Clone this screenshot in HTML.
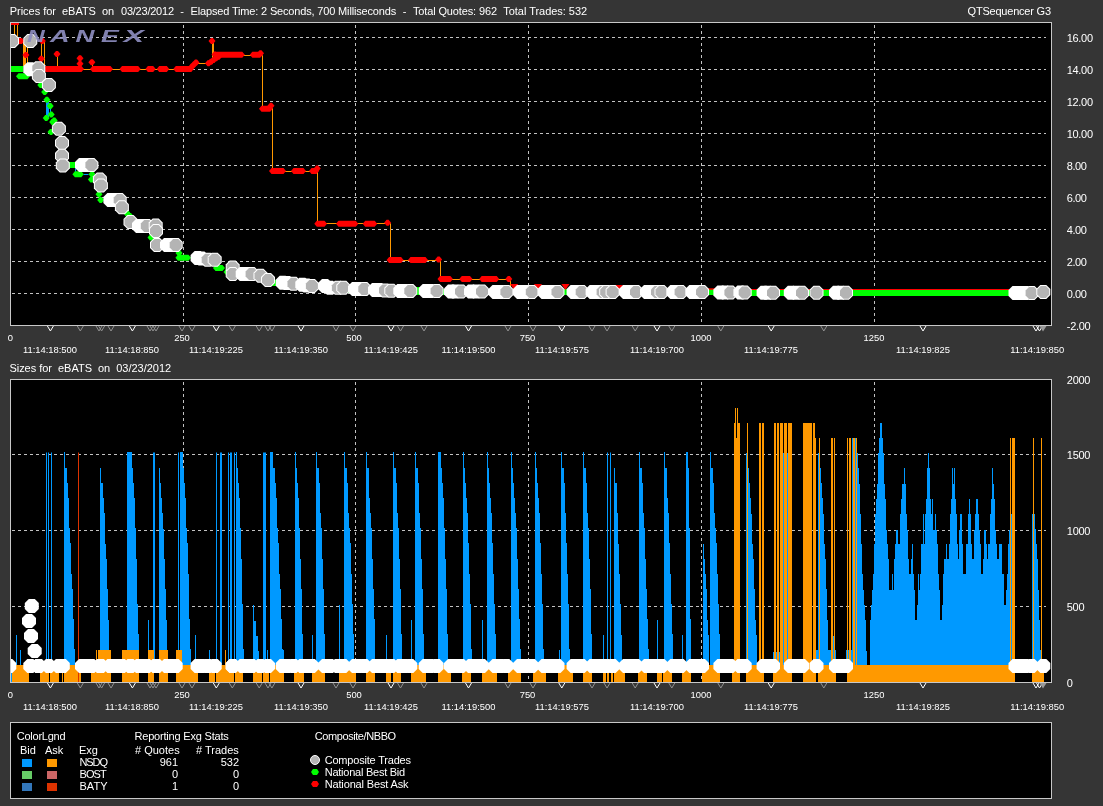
<!DOCTYPE html>
<html><head><meta charset="utf-8"><title>Nanex eBATS</title>
<style>
html,body{margin:0;padding:0;background:#353535;}
body{width:1103px;height:806px;overflow:hidden;font-family:"Liberation Sans",sans-serif;}
svg{display:block;font-family:"Liberation Sans",sans-serif;}
</style></head>
<body>
<svg width="1103" height="806" viewBox="0 0 1103 806">
<rect width="1103" height="806" fill="#353535"/>
<rect x="10" y="22" width="1042" height="304" fill="#c8c8c8"/>
<rect x="11" y="23" width="1040" height="302" fill="#000"/>
<rect x="10" y="379" width="1042" height="304" fill="#c8c8c8"/>
<rect x="11" y="380" width="1040" height="302" fill="#000"/>
<rect x="10" y="722" width="1042" height="77" fill="#c8c8c8"/>
<rect x="11" y="723" width="1040" height="75" fill="#000"/>
<line x1="12" x2="1046" y1="37.5" y2="37.5" stroke="#c2c2c2" stroke-width="1" stroke-dasharray="3 3"/>
<line x1="12" x2="1046" y1="69.5" y2="69.5" stroke="#c2c2c2" stroke-width="1" stroke-dasharray="3 3"/>
<line x1="12" x2="1046" y1="101.5" y2="101.5" stroke="#c2c2c2" stroke-width="1" stroke-dasharray="3 3"/>
<line x1="12" x2="1046" y1="133.5" y2="133.5" stroke="#c2c2c2" stroke-width="1" stroke-dasharray="3 3"/>
<line x1="12" x2="1046" y1="165.5" y2="165.5" stroke="#c2c2c2" stroke-width="1" stroke-dasharray="3 3"/>
<line x1="12" x2="1046" y1="197.5" y2="197.5" stroke="#c2c2c2" stroke-width="1" stroke-dasharray="3 3"/>
<line x1="12" x2="1046" y1="229.5" y2="229.5" stroke="#c2c2c2" stroke-width="1" stroke-dasharray="3 3"/>
<line x1="12" x2="1046" y1="261.5" y2="261.5" stroke="#c2c2c2" stroke-width="1" stroke-dasharray="3 3"/>
<line x1="12" x2="1046" y1="293.5" y2="293.5" stroke="#c2c2c2" stroke-width="1" stroke-dasharray="3 3"/>
<line x1="12" x2="1046" y1="454.5" y2="454.5" stroke="#c2c2c2" stroke-width="1" stroke-dasharray="3 3"/>
<line x1="12" x2="1046" y1="530.5" y2="530.5" stroke="#c2c2c2" stroke-width="1" stroke-dasharray="3 3"/>
<line x1="12" x2="1046" y1="606.5" y2="606.5" stroke="#c2c2c2" stroke-width="1" stroke-dasharray="3 3"/>
<line x1="183.5" x2="183.5" y1="25" y2="325" stroke="#c2c2c2" stroke-width="1" stroke-dasharray="3 3"/>
<line x1="183.5" x2="183.5" y1="382" y2="682" stroke="#c2c2c2" stroke-width="1" stroke-dasharray="3 3"/>
<line x1="355.5" x2="355.5" y1="25" y2="325" stroke="#c2c2c2" stroke-width="1" stroke-dasharray="3 3"/>
<line x1="355.5" x2="355.5" y1="382" y2="682" stroke="#c2c2c2" stroke-width="1" stroke-dasharray="3 3"/>
<line x1="528.5" x2="528.5" y1="25" y2="325" stroke="#c2c2c2" stroke-width="1" stroke-dasharray="3 3"/>
<line x1="528.5" x2="528.5" y1="382" y2="682" stroke="#c2c2c2" stroke-width="1" stroke-dasharray="3 3"/>
<line x1="701.5" x2="701.5" y1="25" y2="325" stroke="#c2c2c2" stroke-width="1" stroke-dasharray="3 3"/>
<line x1="701.5" x2="701.5" y1="382" y2="682" stroke="#c2c2c2" stroke-width="1" stroke-dasharray="3 3"/>
<line x1="874.5" x2="874.5" y1="25" y2="325" stroke="#c2c2c2" stroke-width="1" stroke-dasharray="3 3"/>
<line x1="874.5" x2="874.5" y1="382" y2="682" stroke="#c2c2c2" stroke-width="1" stroke-dasharray="3 3"/>
<defs><clipPath id="c1"><rect x="11" y="23" width="1040" height="302"/></clipPath><clipPath id="c2"><rect x="11" y="380" width="1040" height="302"/></clipPath></defs>
<g clip-path="url(#c1)">
<polyline points="44.5,69.5 192.5,69.5 192.5,63.5 212.5,63.5 212.5,55.5 262.5,55.5 262.5,108.5 272.5,108.5 272.5,171.5 317.5,171.5 317.5,223.5 390.5,223.5 390.5,260.5 440.5,260.5 440.5,279.5 510.5,279.5 510.5,288.5" fill="none" stroke="#ff9900" stroke-width="1" />
<polyline points="212.5,41.5 212.5,55.5" fill="none" stroke="#ff9900" stroke-width="1" />
<polyline points="213.5,41.5 213.5,55.5" fill="none" stroke="#ff9900" stroke-width="1" />
<polyline points="57.5,54.5 57.5,66.5" fill="none" stroke="#ff9900" stroke-width="1" />
<polyline points="41.5,41.5 41.5,66.5" fill="none" stroke="#ff9900" stroke-width="1" />
<polyline points="44.5,41.5 44.5,66.5" fill="none" stroke="#ff9900" stroke-width="1" />
<polyline points="27.5,41.5 27.5,66.5" fill="none" stroke="#ff9900" stroke-width="1" />
<polyline points="14.5,23.5 14.5,36.5" fill="none" stroke="#ff9900" stroke-width="1" />
<polyline points="17.5,23.5 17.5,36.5" fill="none" stroke="#ff9900" stroke-width="1" />
<polyline points="80.5,58.5 80.5,66.5" fill="none" stroke="#ff9900" stroke-width="1" />
<polyline points="92.5,62.5 92.5,66.5" fill="none" stroke="#ff9900" stroke-width="1" />
<rect x="23" y="41" width="3" height="25" fill="#ff9900"/>
<polyline points="47.5,100.5 47.5,117.5" fill="none" stroke="#0099ff" stroke-width="1"/>
<polyline points="46.5,100.5 46.5,117.5" fill="none" stroke="#0099ff" stroke-width="1"/>
<polyline points="48.5,100.5 48.5,117.5" fill="none" stroke="#0099ff" stroke-width="1"/>
<polyline points="50.5,106.5 50.5,114.5" fill="none" stroke="#0099ff" stroke-width="1"/>
<polyline points="75.5,168.5 75.5,174.5" fill="none" stroke="#0099ff" stroke-width="1"/>
<polyline points="83.5,174.5 88.5,174.5" fill="none" stroke="#0099ff" stroke-width="1"/>
<rect x="6" y="66" width="17.4" height="6" fill="#00ff00"/>
<polygon points="16,76.3 18.5,73.3 27.5,73.3 30,76.3 27.5,79.3 18.5,79.3" fill="#00ff00"/>
<polygon points="66,165 68.5,162 75.5,162 78,165 75.5,168 68.5,168" fill="#00ff00"/>
<polygon points="213,268 215.5,265 222.5,265 225,268 222.5,271 215.5,271" fill="#00ff00"/>
<polygon points="72.4,174.2 74.9,171.2 81.3,171.2 83.8,174.2 81.3,177.2 74.9,177.2" fill="#00ff00"/>
<polygon points="175.4,257.8 177.9,254.8 188.5,254.8 191,257.8 188.5,260.8 177.9,260.8" fill="#00ff00"/>
<rect x="272" y="280" width="18" height="6" fill="#00ff00"/>
<rect x="300" y="283" width="30" height="6" fill="#00ff00"/>
<rect x="340" y="287" width="80" height="6" fill="#00ff00"/>
<rect x="415" y="289" width="345" height="6" fill="#00ff00"/>
<rect x="750" y="290" width="259" height="6" fill="#00ff00"/>
<polygon points="37.3,85 39.8,82 41.8,82 44.3,85 41.8,88 39.8,88" fill="#00ff00"/>
<polygon points="41.2,92 43.7,89 45.7,89 48.2,92 45.7,95 43.7,95" fill="#00ff00"/>
<polygon points="43.4,99.7 45.9,96.7 47.9,96.7 50.4,99.7 47.9,102.7 45.9,102.7" fill="#00ff00"/>
<polygon points="46.7,105.9 49.2,102.9 51.2,102.9 53.7,105.9 51.2,108.9 49.2,108.9" fill="#00ff00"/>
<polygon points="42.7,117.9 45.2,114.9 47.2,114.9 49.7,117.9 47.2,120.9 45.2,120.9" fill="#00ff00"/>
<polygon points="47.7,114.6 50.2,111.6 52.2,111.6 54.7,114.6 52.2,117.6 50.2,117.6" fill="#00ff00"/>
<polygon points="50.7,120.6 53.2,117.6 55.2,117.6 57.7,120.6 55.2,123.6 53.2,123.6" fill="#00ff00"/>
<polygon points="49.2,122 51.7,119 53.7,119 56.2,122 53.7,125 51.7,125" fill="#00ff00"/>
<polygon points="47.5,132 50,129 52,129 54.5,132 52,135 50,135" fill="#00ff00"/>
<polygon points="88.5,174.2 91,171.2 93,171.2 95.5,174.2 93,177.2 91,177.2" fill="#00ff00"/>
<polygon points="87.9,179.6 90.4,176.6 92.4,176.6 94.9,179.6 92.4,182.6 90.4,182.6" fill="#00ff00"/>
<polygon points="95.5,194.2 98,191.2 100,191.2 102.5,194.2 100,197.2 98,197.2" fill="#00ff00"/>
<polygon points="97.2,200 99.7,197 101.7,197 104.2,200 101.7,203 99.7,203" fill="#00ff00"/>
<polygon points="124.1,213.9 126.6,210.9 128.6,210.9 131.1,213.9 128.6,216.9 126.6,216.9" fill="#00ff00"/>
<polygon points="121.5,211 124,208 126,208 128.5,211 126,214 124,214" fill="#00ff00"/>
<polygon points="126.5,216 129,213 131,213 133.5,216 131,219 129,219" fill="#00ff00"/>
<polygon points="147.5,237.5 150,234.5 152,234.5 154.5,237.5 152,240.5 150,240.5" fill="#00ff00"/>
<polygon points="175.5,253 178,250 180,250 182.5,253 180,256 178,256" fill="#00ff00"/>
<polygon points="223.5,272 226,269 228,269 230.5,272 228,275 226,275" fill="#00ff00"/>
<polygon points="124.5,214.5 127,211.5 129,211.5 131.5,214.5 129,217.5 127,217.5" fill="#00ff00"/>
<polygon points="270.9,282.8 273.4,279.8 275.4,279.8 277.9,282.8 275.4,285.8 273.4,285.8" fill="#00ff00"/>
<rect x="751" y="289" width="258" height="1" fill="#ff0000"/>
<rect x="705" y="288.3" width="11" height="1.5" fill="#ff0000"/>
<polygon points="16,41 18.5,38 22,38 24.5,41 22,44 18.5,44" fill="#ff0000"/>
<polygon points="43.2,69 45.7,66 81.5,66 84,69 81.5,72 45.7,72" fill="#ff0000"/>
<polygon points="90,69 92.5,66 110.5,66 113,69 110.5,72 92.5,72" fill="#ff0000"/>
<polygon points="119.5,69 122,66 138.2,66 140.7,69 138.2,72 122,72" fill="#ff0000"/>
<polygon points="145.4,69 147.9,66 153.2,66 155.7,69 153.2,72 147.9,72" fill="#ff0000"/>
<polygon points="156.7,69 159.2,66 166.8,66 169.3,69 166.8,72 159.2,72" fill="#ff0000"/>
<polygon points="173.3,69 175.8,66 191.3,66 193.8,69 191.3,72 175.8,72" fill="#ff0000"/>
<polygon points="214,54.8 216.5,51.8 242.3,51.8 244.8,54.8 242.3,57.8 216.5,57.8" fill="#ff0000"/>
<polygon points="249.8,54.8 252.3,51.8 260.2,51.8 262.7,54.8 260.2,57.8 252.3,57.8" fill="#ff0000"/>
<polygon points="259,108.8 261.5,105.8 270.2,105.8 272.7,108.8 270.2,111.8 261.5,111.8" fill="#ff0000"/>
<polygon points="269,171 271.5,168 283.5,168 286,171 283.5,174 271.5,174" fill="#ff0000"/>
<polygon points="291,171 293.5,168 303.5,168 306,171 303.5,174 293.5,174" fill="#ff0000"/>
<polygon points="309,171 311.5,168 316.5,168 319,171 316.5,174 311.5,174" fill="#ff0000"/>
<polygon points="314.3,223.8 316.8,220.8 324.5,220.8 327,223.8 324.5,226.8 316.8,226.8" fill="#ff0000"/>
<polygon points="336,223.8 338.5,220.8 355.8,220.8 358.3,223.8 355.8,226.8 338.5,226.8" fill="#ff0000"/>
<polygon points="362.7,223.8 365.2,220.8 374.7,220.8 377.2,223.8 374.7,226.8 365.2,226.8" fill="#ff0000"/>
<polygon points="386.6,260 389.1,257 401.1,257 403.6,260 401.1,263 389.1,263" fill="#ff0000"/>
<polygon points="408,260 410.5,257 425.5,257 428,260 425.5,263 410.5,263" fill="#ff0000"/>
<polygon points="437.5,279 440,276 450.4,276 452.9,279 450.4,282 440,282" fill="#ff0000"/>
<polygon points="459.3,279 461.8,276 470,276 472.5,279 470,282 461.8,282" fill="#ff0000"/>
<polygon points="479.2,279 481.7,276 496.7,276 499.2,279 496.7,282 481.7,282" fill="#ff0000"/>
<polygon points="22.4,55 24.9,52 26.9,52 29.4,55 26.9,58 24.9,58" fill="#ff0000"/>
<polygon points="38.8,40.9 41.3,37.9 43.3,37.9 45.8,40.9 43.3,43.9 41.3,43.9" fill="#ff0000"/>
<polygon points="37.8,58.7 40.3,55.7 42.3,55.7 44.8,58.7 42.3,61.7 40.3,61.7" fill="#ff0000"/>
<polygon points="53.5,54 56,51 58,51 60.5,54 58,57 56,57" fill="#ff0000"/>
<polygon points="76.5,58.2 79,55.2 81,55.2 83.5,58.2 81,61.2 79,61.2" fill="#ff0000"/>
<polygon points="76.5,63.7 79,60.7 81,60.7 83.5,63.7 81,66.7 79,66.7" fill="#ff0000"/>
<polygon points="88.4,62.2 90.9,59.2 92.9,59.2 95.4,62.2 92.9,65.2 90.9,65.2" fill="#ff0000"/>
<polygon points="192.5,62.5 195,59.5 197,59.5 199.5,62.5 197,65.5 195,65.5" fill="#ff0000"/>
<polygon points="190.5,64.5 193,61.5 195,61.5 197.5,64.5 195,67.5 193,67.5" fill="#ff0000"/>
<polygon points="188.5,66.5 191,63.5 193,63.5 195.5,66.5 193,69.5 191,69.5" fill="#ff0000"/>
<polygon points="205,63.3 207.5,60.3 209.5,60.3 212,63.3 209.5,66.3 207.5,66.3" fill="#ff0000"/>
<polygon points="207.5,61.8 210,58.8 212,58.8 214.5,61.8 212,64.8 210,64.8" fill="#ff0000"/>
<polygon points="210,60 212.5,57 214.5,57 217,60 214.5,63 212.5,63" fill="#ff0000"/>
<polygon points="212.5,58.3 215,55.3 217,55.3 219.5,58.3 217,61.3 215,61.3" fill="#ff0000"/>
<polygon points="215,56.7 217.5,53.7 219.5,53.7 222,56.7 219.5,59.7 217.5,59.7" fill="#ff0000"/>
<polygon points="211.5,54.5 214,51.5 216,51.5 218.5,54.5 216,57.5 214,57.5" fill="#ff0000"/>
<polygon points="208.5,41 211,38 213,38 215.5,41 213,44 211,44" fill="#ff0000"/>
<polygon points="257,53.2 259.5,50.2 261.5,50.2 264,53.2 261.5,56.2 259.5,56.2" fill="#ff0000"/>
<polygon points="267.5,105.7 270,102.7 272,102.7 274.5,105.7 272,108.7 270,108.7" fill="#ff0000"/>
<polygon points="313.7,168.5 316.2,165.5 318.2,165.5 320.7,168.5 318.2,171.5 316.2,171.5" fill="#ff0000"/>
<polygon points="384.1,222.7 386.6,219.7 388.6,219.7 391.1,222.7 388.6,225.7 386.6,225.7" fill="#ff0000"/>
<polygon points="435.1,259.6 437.6,256.6 439.6,256.6 442.1,259.6 439.6,262.6 437.6,262.6" fill="#ff0000"/>
<polygon points="505.3,279 507.8,276 509.8,276 512.3,279 509.8,282 507.8,282" fill="#ff0000"/>
<rect x="11" y="23" width="8" height="2" fill="#ff0000"/>
<polygon points="510.2,284 518.2,284 514.2,290" fill="#ff0000"/>
<polygon points="534,284 542,284 538,290" fill="#ff0000"/>
<polygon points="561.4,284 569.4,284 565.4,290" fill="#ff0000"/>
<polygon points="615,285 623,285 619,291" fill="#ff0000"/>
<polygon points="9,33.9 15,33.9 19,37.9 19,43.9 15,47.9 9,47.9 5,43.9 5,37.9" fill="#fff"/>
<polygon points="9.43,34.9 14.57,34.9 18,38.33 18,43.47 14.57,46.9 9.43,46.9 6,43.47 6,38.33" fill="#b4b4b4"/>
<polygon points="27.3,33.9 33.3,33.9 37.3,37.9 37.3,43.9 33.3,47.9 27.3,47.9 23.3,43.9 23.3,37.9" fill="#fff"/>
<polygon points="27.73,34.9 32.87,34.9 36.3,38.33 36.3,43.47 32.87,46.9 27.73,46.9 24.3,43.47 24.3,38.33" fill="#b4b4b4"/>
<polygon points="27.3,62.2 33.3,62.2 37.3,66.2 37.3,72.2 33.3,76.2 27.3,76.2 23.3,72.2 23.3,66.2" fill="#fff"/>
<polygon points="35.3,61.3 41.3,61.3 45.3,65.3 45.3,71.3 41.3,75.3 35.3,75.3 31.3,71.3 31.3,65.3" fill="#fff"/>
<polygon points="35.73,62.3 40.87,62.3 44.3,65.73 44.3,70.87 40.87,74.3 35.73,74.3 32.3,70.87 32.3,65.73" fill="#b4b4b4"/>
<polygon points="35.9,68.9 41.9,68.9 45.9,72.9 45.9,78.9 41.9,82.9 35.9,82.9 31.9,78.9 31.9,72.9" fill="#fff"/>
<polygon points="36.33,69.9 41.47,69.9 44.9,73.33 44.9,78.47 41.47,81.9 36.33,81.9 32.9,78.47 32.9,73.33" fill="#b4b4b4"/>
<polygon points="45.9,77.9 51.9,77.9 55.9,81.9 55.9,87.9 51.9,91.9 45.9,91.9 41.9,87.9 41.9,81.9" fill="#fff"/>
<polygon points="46.33,78.9 51.47,78.9 54.9,82.33 54.9,87.47 51.47,90.9 46.33,90.9 42.9,87.47 42.9,82.33" fill="#b4b4b4"/>
<polygon points="55.9,121.7 61.9,121.7 65.9,125.7 65.9,131.7 61.9,135.7 55.9,135.7 51.9,131.7 51.9,125.7" fill="#fff"/>
<polygon points="56.33,122.7 61.47,122.7 64.9,126.13 64.9,131.27 61.47,134.7 56.33,134.7 52.9,131.27 52.9,126.13" fill="#b4b4b4"/>
<polygon points="59,135.9 65,135.9 69,139.9 69,145.9 65,149.9 59,149.9 55,145.9 55,139.9" fill="#fff"/>
<polygon points="59.43,136.9 64.57,136.9 68,140.33 68,145.47 64.57,148.9 59.43,148.9 56,145.47 56,140.33" fill="#b4b4b4"/>
<polygon points="59,148.8 65,148.8 69,152.8 69,158.8 65,162.8 59,162.8 55,158.8 55,152.8" fill="#fff"/>
<polygon points="59.43,149.8 64.57,149.8 68,153.23 68,158.37 64.57,161.8 59.43,161.8 56,158.37 56,153.23" fill="#b4b4b4"/>
<polygon points="59.8,158.5 65.8,158.5 69.8,162.5 69.8,168.5 65.8,172.5 59.8,172.5 55.8,168.5 55.8,162.5" fill="#fff"/>
<polygon points="60.23,159.5 65.37,159.5 68.8,162.93 68.8,168.07 65.37,171.5 60.23,171.5 56.8,168.07 56.8,162.93" fill="#b4b4b4"/>
<polygon points="79,158 85,158 89,162 89,168 85,172 79,172 75,168 75,162" fill="#fff"/>
<polygon points="83,158 89,158 93,162 93,168 89,172 83,172 79,168 79,162" fill="#fff"/>
<polygon points="88.4,158 94.4,158 98.4,162 98.4,168 94.4,172 88.4,172 84.4,168 84.4,162" fill="#fff"/>
<polygon points="88.83,159 93.97,159 97.4,162.43 97.4,167.57 93.97,171 88.83,171 85.4,167.57 85.4,162.43" fill="#b4b4b4"/>
<polygon points="96.9,172.6 102.9,172.6 106.9,176.6 106.9,182.6 102.9,186.6 96.9,186.6 92.9,182.6 92.9,176.6" fill="#fff"/>
<polygon points="97.33,173.6 102.47,173.6 105.9,177.03 105.9,182.17 102.47,185.6 97.33,185.6 93.9,182.17 93.9,177.03" fill="#b4b4b4"/>
<polygon points="97.9,178.4 103.9,178.4 107.9,182.4 107.9,188.4 103.9,192.4 97.9,192.4 93.9,188.4 93.9,182.4" fill="#fff"/>
<polygon points="98.33,179.4 103.47,179.4 106.9,182.83 106.9,187.97 103.47,191.4 98.33,191.4 94.9,187.97 94.9,182.83" fill="#b4b4b4"/>
<polygon points="107.4,193 113.4,193 117.4,197 117.4,203 113.4,207 107.4,207 103.4,203 103.4,197" fill="#fff"/>
<polygon points="111.5,193 117.5,193 121.5,197 121.5,203 117.5,207 111.5,207 107.5,203 107.5,197" fill="#fff"/>
<polygon points="116.7,193 122.7,193 126.7,197 126.7,203 122.7,207 116.7,207 112.7,203 112.7,197" fill="#fff"/>
<polygon points="117.13,194 122.27,194 125.7,197.43 125.7,202.57 122.27,206 117.13,206 113.7,202.57 113.7,197.43" fill="#b4b4b4"/>
<polygon points="118.9,200.3 124.9,200.3 128.9,204.3 128.9,210.3 124.9,214.3 118.9,214.3 114.9,210.3 114.9,204.3" fill="#fff"/>
<polygon points="119.33,201.3 124.47,201.3 127.9,204.73 127.9,209.87 124.47,213.3 119.33,213.3 115.9,209.87 115.9,204.73" fill="#b4b4b4"/>
<polygon points="127.5,215 133.5,215 137.5,219 137.5,225 133.5,229 127.5,229 123.5,225 123.5,219" fill="#fff"/>
<polygon points="127.93,216 133.07,216 136.5,219.43 136.5,224.57 133.07,228 127.93,228 124.5,224.57 124.5,219.43" fill="#b4b4b4"/>
<polygon points="136,219 142,219 146,223 146,229 142,233 136,233 132,229 132,223" fill="#fff"/>
<polygon points="139.5,219 145.5,219 149.5,223 149.5,229 145.5,233 139.5,233 135.5,229 135.5,223" fill="#fff"/>
<polygon points="143.8,219 149.8,219 153.8,223 153.8,229 149.8,233 143.8,233 139.8,229 139.8,223" fill="#fff"/>
<polygon points="144.23,220 149.37,220 152.8,223.43 152.8,228.57 149.37,232 144.23,232 140.8,228.57 140.8,223.43" fill="#b4b4b4"/>
<polygon points="152.7,218.5 158.7,218.5 162.7,222.5 162.7,228.5 158.7,232.5 152.7,232.5 148.7,228.5 148.7,222.5" fill="#fff"/>
<polygon points="153.13,219.5 158.27,219.5 161.7,222.93 161.7,228.07 158.27,231.5 153.13,231.5 149.7,228.07 149.7,222.93" fill="#b4b4b4"/>
<polygon points="153,224 159,224 163,228 163,234 159,238 153,238 149,234 149,228" fill="#fff"/>
<polygon points="153.43,225 158.57,225 162,228.43 162,233.57 158.57,237 153.43,237 150,233.57 150,228.43" fill="#b4b4b4"/>
<polygon points="154,238 160,238 164,242 164,248 160,252 154,252 150,248 150,242" fill="#fff"/>
<polygon points="154.43,239 159.57,239 163,242.43 163,247.57 159.57,251 154.43,251 151,247.57 151,242.43" fill="#b4b4b4"/>
<polygon points="164,238 170,238 174,242 174,248 170,252 164,252 160,248 160,242" fill="#fff"/>
<polygon points="168,238 174,238 178,242 178,248 174,252 168,252 164,248 164,242" fill="#fff"/>
<polygon points="172.7,238 178.7,238 182.7,242 182.7,248 178.7,252 172.7,252 168.7,248 168.7,242" fill="#fff"/>
<polygon points="173.13,239 178.27,239 181.7,242.43 181.7,247.57 178.27,251 173.13,251 169.7,247.57 169.7,242.43" fill="#b4b4b4"/>
<polygon points="194.6,251 200.6,251 204.6,255 204.6,261 200.6,265 194.6,265 190.6,261 190.6,255" fill="#fff"/>
<polygon points="198.5,251.5 204.5,251.5 208.5,255.5 208.5,261.5 204.5,265.5 198.5,265.5 194.5,261.5 194.5,255.5" fill="#fff"/>
<polygon points="204.7,252.7 210.7,252.7 214.7,256.7 214.7,262.7 210.7,266.7 204.7,266.7 200.7,262.7 200.7,256.7" fill="#fff"/>
<polygon points="205.13,253.7 210.27,253.7 213.7,257.13 213.7,262.27 210.27,265.7 205.13,265.7 201.7,262.27 201.7,257.13" fill="#b4b4b4"/>
<polygon points="211.7,252.7 217.7,252.7 221.7,256.7 221.7,262.7 217.7,266.7 211.7,266.7 207.7,262.7 207.7,256.7" fill="#fff"/>
<polygon points="212.13,253.7 217.27,253.7 220.7,257.13 220.7,262.27 217.27,265.7 212.13,265.7 208.7,262.27 208.7,257.13" fill="#b4b4b4"/>
<polygon points="229.7,260.5 235.7,260.5 239.7,264.5 239.7,270.5 235.7,274.5 229.7,274.5 225.7,270.5 225.7,264.5" fill="#fff"/>
<polygon points="230.13,261.5 235.27,261.5 238.7,264.93 238.7,270.07 235.27,273.5 230.13,273.5 226.7,270.07 226.7,264.93" fill="#b4b4b4"/>
<polygon points="229.7,267 235.7,267 239.7,271 239.7,277 235.7,281 229.7,281 225.7,277 225.7,271" fill="#fff"/>
<polygon points="230.13,268 235.27,268 238.7,271.43 238.7,276.57 235.27,280 230.13,280 226.7,276.57 226.7,271.43" fill="#b4b4b4"/>
<polygon points="239.7,267 245.7,267 249.7,271 249.7,277 245.7,281 239.7,281 235.7,277 235.7,271" fill="#fff"/>
<polygon points="243,267 249,267 253,271 253,277 249,281 243,281 239,277 239,271" fill="#fff"/>
<polygon points="248.6,267 254.6,267 258.6,271 258.6,277 254.6,281 248.6,281 244.6,277 244.6,271" fill="#fff"/>
<polygon points="249.03,268 254.17,268 257.6,271.43 257.6,276.57 254.17,280 249.03,280 245.6,276.57 245.6,271.43" fill="#b4b4b4"/>
<polygon points="257.5,268.8 263.5,268.8 267.5,272.8 267.5,278.8 263.5,282.8 257.5,282.8 253.5,278.8 253.5,272.8" fill="#fff"/>
<polygon points="257.93,269.8 263.07,269.8 266.5,273.23 266.5,278.37 263.07,281.8 257.93,281.8 254.5,278.37 254.5,273.23" fill="#b4b4b4"/>
<polygon points="265,273 271,273 275,277 275,283 271,287 265,287 261,283 261,277" fill="#fff"/>
<polygon points="265.43,274 270.57,274 274,277.43 274,282.57 270.57,286 265.43,286 262,282.57 262,277.43" fill="#b4b4b4"/>
<polygon points="279.7,275.8 285.7,275.8 289.7,279.8 289.7,285.8 285.7,289.8 279.7,289.8 275.7,285.8 275.7,279.8" fill="#fff"/>
<polygon points="284,276 290,276 294,280 294,286 290,290 284,290 280,286 280,280" fill="#fff"/>
<polygon points="290.5,276.8 296.5,276.8 300.5,280.8 300.5,286.8 296.5,290.8 290.5,290.8 286.5,286.8 286.5,280.8" fill="#fff"/>
<polygon points="290.93,277.8 296.07,277.8 299.5,281.23 299.5,286.37 296.07,289.8 290.93,289.8 287.5,286.37 287.5,281.23" fill="#b4b4b4"/>
<polygon points="299.3,277.7 305.3,277.7 309.3,281.7 309.3,287.7 305.3,291.7 299.3,291.7 295.3,287.7 295.3,281.7" fill="#fff"/>
<polygon points="303.5,278.5 309.5,278.5 313.5,282.5 313.5,288.5 309.5,292.5 303.5,292.5 299.5,288.5 299.5,282.5" fill="#fff"/>
<polygon points="308.9,279 314.9,279 318.9,283 318.9,289 314.9,293 308.9,293 304.9,289 304.9,283" fill="#fff"/>
<polygon points="309.33,280 314.47,280 317.9,283.43 317.9,288.57 314.47,292 309.33,292 305.9,288.57 305.9,283.43" fill="#b4b4b4"/>
<polygon points="322,279 328,279 332,283 332,289 328,293 322,293 318,289 318,283" fill="#fff"/>
<polygon points="327,280.8 333,280.8 337,284.8 337,290.8 333,294.8 327,294.8 323,290.8 323,284.8" fill="#fff"/>
<polygon points="334.9,280.8 340.9,280.8 344.9,284.8 344.9,290.8 340.9,294.8 334.9,294.8 330.9,290.8 330.9,284.8" fill="#fff"/>
<polygon points="335.33,281.8 340.47,281.8 343.9,285.23 343.9,290.37 340.47,293.8 335.33,293.8 331.9,290.37 331.9,285.23" fill="#b4b4b4"/>
<polygon points="340.3,280.8 346.3,280.8 350.3,284.8 350.3,290.8 346.3,294.8 340.3,294.8 336.3,290.8 336.3,284.8" fill="#fff"/>
<polygon points="340.73,281.8 345.87,281.8 349.3,285.23 349.3,290.37 345.87,293.8 340.73,293.8 337.3,290.37 337.3,285.23" fill="#b4b4b4"/>
<polygon points="352,282 358,282 362,286 362,292 358,296 352,296 348,292 348,286" fill="#fff"/>
<polygon points="355,282 361,282 365,286 365,292 361,296 355,296 351,292 351,286" fill="#fff"/>
<polygon points="361.3,282 367.3,282 371.3,286 371.3,292 367.3,296 361.3,296 357.3,292 357.3,286" fill="#fff"/>
<polygon points="361.73,283 366.87,283 370.3,286.43 370.3,291.57 366.87,295 361.73,295 358.3,291.57 358.3,286.43" fill="#b4b4b4"/>
<polygon points="372,283 378,283 382,287 382,293 378,297 372,297 368,293 368,287" fill="#fff"/>
<polygon points="376,283 382,283 386,287 386,293 382,297 376,297 372,293 372,287" fill="#fff"/>
<polygon points="382,283.4 388,283.4 392,287.4 392,293.4 388,297.4 382,297.4 378,293.4 378,287.4" fill="#fff"/>
<polygon points="382.43,284.4 387.57,284.4 391,287.83 391,292.97 387.57,296.4 382.43,296.4 379,292.97 379,287.83" fill="#b4b4b4"/>
<polygon points="388.3,283.8 394.3,283.8 398.3,287.8 398.3,293.8 394.3,297.8 388.3,297.8 384.3,293.8 384.3,287.8" fill="#fff"/>
<polygon points="388.73,284.8 393.87,284.8 397.3,288.23 397.3,293.37 393.87,296.8 388.73,296.8 385.3,293.37 385.3,288.23" fill="#b4b4b4"/>
<polygon points="397.3,284 403.3,284 407.3,288 407.3,294 403.3,298 397.3,298 393.3,294 393.3,288" fill="#fff"/>
<polygon points="401,284 407,284 411,288 411,294 407,298 401,298 397,294 397,288" fill="#fff"/>
<polygon points="407.3,284 413.3,284 417.3,288 417.3,294 413.3,298 407.3,298 403.3,294 403.3,288" fill="#fff"/>
<polygon points="407.73,285 412.87,285 416.3,288.43 416.3,293.57 412.87,297 407.73,297 404.3,293.57 404.3,288.43" fill="#b4b4b4"/>
<polygon points="422.7,284 428.7,284 432.7,288 432.7,294 428.7,298 422.7,298 418.7,294 418.7,288" fill="#fff"/>
<polygon points="427,284 433,284 437,288 437,294 433,298 427,298 423,294 423,288" fill="#fff"/>
<polygon points="433.6,284 439.6,284 443.6,288 443.6,294 439.6,298 433.6,298 429.6,294 429.6,288" fill="#fff"/>
<polygon points="434.03,285 439.17,285 442.6,288.43 442.6,293.57 439.17,297 434.03,297 430.6,293.57 430.6,288.43" fill="#b4b4b4"/>
<polygon points="448,284.5 454,284.5 458,288.5 458,294.5 454,298.5 448,298.5 444,294.5 444,288.5" fill="#fff"/>
<polygon points="452,284.5 458,284.5 462,288.5 462,294.5 458,298.5 452,298.5 448,294.5 448,288.5" fill="#fff"/>
<polygon points="458,284.5 464,284.5 468,288.5 468,294.5 464,298.5 458,298.5 454,294.5 454,288.5" fill="#fff"/>
<polygon points="458.43,285.5 463.57,285.5 467,288.93 467,294.07 463.57,297.5 458.43,297.5 455,294.07 455,288.93" fill="#b4b4b4"/>
<polygon points="468,284.5 474,284.5 478,288.5 478,294.5 474,298.5 468,298.5 464,294.5 464,288.5" fill="#fff"/>
<polygon points="473,284.5 479,284.5 483,288.5 483,294.5 479,298.5 473,298.5 469,294.5 469,288.5" fill="#fff"/>
<polygon points="479,284.5 485,284.5 489,288.5 489,294.5 485,298.5 479,298.5 475,294.5 475,288.5" fill="#fff"/>
<polygon points="479.43,285.5 484.57,285.5 488,288.93 488,294.07 484.57,297.5 479.43,297.5 476,294.07 476,288.93" fill="#b4b4b4"/>
<polygon points="492.5,285 498.5,285 502.5,289 502.5,295 498.5,299 492.5,299 488.5,295 488.5,289" fill="#fff"/>
<polygon points="497,285 503,285 507,289 507,295 503,299 497,299 493,295 493,289" fill="#fff"/>
<polygon points="503.4,285 509.4,285 513.4,289 513.4,295 509.4,299 503.4,299 499.4,295 499.4,289" fill="#fff"/>
<polygon points="503.83,286 508.97,286 512.4,289.43 512.4,294.57 508.97,298 503.83,298 500.4,294.57 500.4,289.43" fill="#b4b4b4"/>
<polygon points="517,285 523,285 527,289 527,295 523,299 517,299 513,295 513,289" fill="#fff"/>
<polygon points="522,285 528,285 532,289 532,295 528,299 522,299 518,295 518,289" fill="#fff"/>
<polygon points="528.8,285 534.8,285 538.8,289 538.8,295 534.8,299 528.8,299 524.8,295 524.8,289" fill="#fff"/>
<polygon points="529.23,286 534.37,286 537.8,289.43 537.8,294.57 534.37,298 529.23,298 525.8,294.57 525.8,289.43" fill="#b4b4b4"/>
<polygon points="541.5,285 547.5,285 551.5,289 551.5,295 547.5,299 541.5,299 537.5,295 537.5,289" fill="#fff"/>
<polygon points="546,285 552,285 556,289 556,295 552,299 546,299 542,295 542,289" fill="#fff"/>
<polygon points="549,285 555,285 559,289 559,295 555,299 549,299 545,295 545,289" fill="#fff"/>
<polygon points="554.5,285 560.5,285 564.5,289 564.5,295 560.5,299 554.5,299 550.5,295 550.5,289" fill="#fff"/>
<polygon points="554.93,286 560.07,286 563.5,289.43 563.5,294.57 560.07,298 554.93,298 551.5,294.57 551.5,289.43" fill="#b4b4b4"/>
<polygon points="570.6,285 576.6,285 580.6,289 580.6,295 576.6,299 570.6,299 566.6,295 566.6,289" fill="#fff"/>
<polygon points="574,285 580,285 584,289 584,295 580,299 574,299 570,295 570,289" fill="#fff"/>
<polygon points="578.7,285 584.7,285 588.7,289 588.7,295 584.7,299 578.7,299 574.7,295 574.7,289" fill="#fff"/>
<polygon points="579.13,286 584.27,286 587.7,289.43 587.7,294.57 584.27,298 579.13,298 575.7,294.57 575.7,289.43" fill="#b4b4b4"/>
<polygon points="589.6,285 595.6,285 599.6,289 599.6,295 595.6,299 589.6,299 585.6,295 585.6,289" fill="#fff"/>
<polygon points="594,285 600,285 604,289 604,295 600,299 594,299 590,295 590,289" fill="#fff"/>
<polygon points="599.6,285 605.6,285 609.6,289 609.6,295 605.6,299 599.6,299 595.6,295 595.6,289" fill="#fff"/>
<polygon points="600.03,286 605.17,286 608.6,289.43 608.6,294.57 605.17,298 600.03,298 596.6,294.57 596.6,289.43" fill="#b4b4b4"/>
<polygon points="603.2,285 609.2,285 613.2,289 613.2,295 609.2,299 603.2,299 599.2,295 599.2,289" fill="#fff"/>
<polygon points="603.63,286 608.77,286 612.2,289.43 612.2,294.57 608.77,298 603.63,298 600.2,294.57 600.2,289.43" fill="#b4b4b4"/>
<polygon points="609.6,285 615.6,285 619.6,289 619.6,295 615.6,299 609.6,299 605.6,295 605.6,289" fill="#fff"/>
<polygon points="610.03,286 615.17,286 618.6,289.43 618.6,294.57 615.17,298 610.03,298 606.6,294.57 606.6,289.43" fill="#b4b4b4"/>
<polygon points="623,285 629,285 633,289 633,295 629,299 623,299 619,295 619,289" fill="#fff"/>
<polygon points="627,285 633,285 637,289 637,295 633,299 627,299 623,295 623,289" fill="#fff"/>
<polygon points="633,285 639,285 643,289 643,295 639,299 633,299 629,295 629,289" fill="#fff"/>
<polygon points="633.43,286 638.57,286 642,289.43 642,294.57 638.57,298 633.43,298 630,294.57 630,289.43" fill="#b4b4b4"/>
<polygon points="644,285 650,285 654,289 654,295 650,299 644,299 640,295 640,289" fill="#fff"/>
<polygon points="648,285 654,285 658,289 658,295 654,299 648,299 644,295 644,289" fill="#fff"/>
<polygon points="654,285 660,285 664,289 664,295 660,299 654,299 650,295 650,289" fill="#fff"/>
<polygon points="654.43,286 659.57,286 663,289.43 663,294.57 659.57,298 654.43,298 651,294.57 651,289.43" fill="#b4b4b4"/>
<polygon points="658.5,285 664.5,285 668.5,289 668.5,295 664.5,299 658.5,299 654.5,295 654.5,289" fill="#fff"/>
<polygon points="658.93,286 664.07,286 667.5,289.43 667.5,294.57 664.07,298 658.93,298 655.5,294.57 655.5,289.43" fill="#b4b4b4"/>
<polygon points="670.3,285 676.3,285 680.3,289 680.3,295 676.3,299 670.3,299 666.3,295 666.3,289" fill="#fff"/>
<polygon points="673,285 679,285 683,289 683,295 679,299 673,299 669,295 669,289" fill="#fff"/>
<polygon points="677.6,285 683.6,285 687.6,289 687.6,295 683.6,299 677.6,299 673.6,295 673.6,289" fill="#fff"/>
<polygon points="678.03,286 683.17,286 686.6,289.43 686.6,294.57 683.17,298 678.03,298 674.6,294.57 674.6,289.43" fill="#b4b4b4"/>
<polygon points="689.3,285 695.3,285 699.3,289 699.3,295 695.3,299 689.3,299 685.3,295 685.3,289" fill="#fff"/>
<polygon points="693,285 699,285 703,289 703,295 699,299 693,299 689,295 689,289" fill="#fff"/>
<polygon points="699,285 705,285 709,289 709,295 705,299 699,299 695,295 695,289" fill="#fff"/>
<polygon points="699.43,286 704.57,286 708,289.43 708,294.57 704.57,298 699.43,298 696,294.57 696,289.43" fill="#b4b4b4"/>
<polygon points="717.4,285.5 723.4,285.5 727.4,289.5 727.4,295.5 723.4,299.5 717.4,299.5 713.4,295.5 713.4,289.5" fill="#fff"/>
<polygon points="722,285.5 728,285.5 732,289.5 732,295.5 728,299.5 722,299.5 718,295.5 718,289.5" fill="#fff"/>
<polygon points="727.4,285.5 733.4,285.5 737.4,289.5 737.4,295.5 733.4,299.5 727.4,299.5 723.4,295.5 723.4,289.5" fill="#fff"/>
<polygon points="727.83,286.5 732.97,286.5 736.4,289.93 736.4,295.07 732.97,298.5 727.83,298.5 724.4,295.07 724.4,289.93" fill="#b4b4b4"/>
<polygon points="737.4,285.5 743.4,285.5 747.4,289.5 747.4,295.5 743.4,299.5 737.4,299.5 733.4,295.5 733.4,289.5" fill="#fff"/>
<polygon points="741.7,285.5 747.7,285.5 751.7,289.5 751.7,295.5 747.7,299.5 741.7,299.5 737.7,295.5 737.7,289.5" fill="#fff"/>
<polygon points="742.13,286.5 747.27,286.5 750.7,289.93 750.7,295.07 747.27,298.5 742.13,298.5 738.7,295.07 738.7,289.93" fill="#b4b4b4"/>
<polygon points="760.6,285.7 766.6,285.7 770.6,289.7 770.6,295.7 766.6,299.7 760.6,299.7 756.6,295.7 756.6,289.7" fill="#fff"/>
<polygon points="764.5,285.7 770.5,285.7 774.5,289.7 774.5,295.7 770.5,299.7 764.5,299.7 760.5,295.7 760.5,289.7" fill="#fff"/>
<polygon points="770,285.7 776,285.7 780,289.7 780,295.7 776,299.7 770,299.7 766,295.7 766,289.7" fill="#fff"/>
<polygon points="770.43,286.7 775.57,286.7 779,290.13 779,295.27 775.57,298.7 770.43,298.7 767,295.27 767,290.13" fill="#b4b4b4"/>
<polygon points="787.8,285.7 793.8,285.7 797.8,289.7 797.8,295.7 793.8,299.7 787.8,299.7 783.8,295.7 783.8,289.7" fill="#fff"/>
<polygon points="793,285.7 799,285.7 803,289.7 803,295.7 799,299.7 793,299.7 789,295.7 789,289.7" fill="#fff"/>
<polygon points="799,285.7 805,285.7 809,289.7 809,295.7 805,299.7 799,299.7 795,295.7 795,289.7" fill="#fff"/>
<polygon points="799.43,286.7 804.57,286.7 808,290.13 808,295.27 804.57,298.7 799.43,298.7 796,295.27 796,290.13" fill="#b4b4b4"/>
<polygon points="813.5,285.7 819.5,285.7 823.5,289.7 823.5,295.7 819.5,299.7 813.5,299.7 809.5,295.7 809.5,289.7" fill="#fff"/>
<polygon points="813.93,286.7 819.07,286.7 822.5,290.13 822.5,295.27 819.07,298.7 813.93,298.7 810.5,295.27 810.5,290.13" fill="#b4b4b4"/>
<polygon points="833,285.7 839,285.7 843,289.7 843,295.7 839,299.7 833,299.7 829,295.7 829,289.7" fill="#fff"/>
<polygon points="837.5,285.7 843.5,285.7 847.5,289.7 847.5,295.7 843.5,299.7 837.5,299.7 833.5,295.7 833.5,289.7" fill="#fff"/>
<polygon points="843,285.7 849,285.7 853,289.7 853,295.7 849,299.7 843,299.7 839,295.7 839,289.7" fill="#fff"/>
<polygon points="843.43,286.7 848.57,286.7 852,290.13 852,295.27 848.57,298.7 843.43,298.7 840,295.27 840,290.13" fill="#b4b4b4"/>
<polygon points="1012.5,286 1018.5,286 1022.5,290 1022.5,296 1018.5,300 1012.5,300 1008.5,296 1008.5,290" fill="#fff"/>
<polygon points="1017,286 1023,286 1027,290 1027,296 1023,300 1017,300 1013,296 1013,290" fill="#fff"/>
<polygon points="1022,286 1028,286 1032,290 1032,296 1028,300 1022,300 1018,296 1018,290" fill="#fff"/>
<polygon points="1028.6,286 1034.6,286 1038.6,290 1038.6,296 1034.6,300 1028.6,300 1024.6,296 1024.6,290" fill="#fff"/>
<polygon points="1029.03,287 1034.17,287 1037.6,290.43 1037.6,295.57 1034.17,299 1029.03,299 1025.6,295.57 1025.6,290.43" fill="#b4b4b4"/>
<polygon points="1040.3,285 1046.3,285 1050.3,289 1050.3,295 1046.3,299 1040.3,299 1036.3,295 1036.3,289" fill="#fff"/>
<polygon points="1040.73,286 1045.87,286 1049.3,289.43 1049.3,294.57 1045.87,298 1040.73,298 1037.3,294.57 1037.3,289.43" fill="#b4b4b4"/>
</g>
<polyline points="47.4,326 50.4,331 53.4,326" fill="none" stroke="#ffffff" stroke-width="1"/>
<polyline points="77.3,326 80.3,331 83.3,326" fill="none" stroke="#909090" stroke-width="1"/>
<polyline points="96,326 99,331 102,326" fill="none" stroke="#909090" stroke-width="1"/>
<polyline points="98.6,326 101.6,331 104.6,326" fill="none" stroke="#909090" stroke-width="1"/>
<polyline points="108,326 111,331 114,326" fill="none" stroke="#909090" stroke-width="1"/>
<polyline points="129.4,326 132.4,331 135.4,326" fill="none" stroke="#ffffff" stroke-width="1"/>
<polyline points="147,326 150,331 153,326" fill="none" stroke="#909090" stroke-width="1"/>
<polyline points="150,326 153,331 156,326" fill="none" stroke="#909090" stroke-width="1"/>
<polyline points="153,326 156,331 159,326" fill="none" stroke="#909090" stroke-width="1"/>
<polyline points="179,326 182,331 185,326" fill="none" stroke="#909090" stroke-width="1"/>
<polyline points="189,326 192,331 195,326" fill="none" stroke="#909090" stroke-width="1"/>
<polyline points="213.3,326 216.3,331 219.3,326" fill="none" stroke="#ffffff" stroke-width="1"/>
<polyline points="229.3,326 232.3,331 235.3,326" fill="none" stroke="#909090" stroke-width="1"/>
<polyline points="256.2,326 259.2,331 262.2,326" fill="none" stroke="#909090" stroke-width="1"/>
<polyline points="265,326 268,331 271,326" fill="none" stroke="#909090" stroke-width="1"/>
<polyline points="268.9,326 271.9,331 274.9,326" fill="none" stroke="#909090" stroke-width="1"/>
<polyline points="298,326 301,331 304,326" fill="none" stroke="#ffffff" stroke-width="1"/>
<polyline points="333,326 336,331 339,326" fill="none" stroke="#909090" stroke-width="1"/>
<polyline points="350,326 353,331 356,326" fill="none" stroke="#909090" stroke-width="1"/>
<polyline points="388,326 391,331 394,326" fill="none" stroke="#ffffff" stroke-width="1"/>
<polyline points="397.5,326 400.5,331 403.5,326" fill="none" stroke="#909090" stroke-width="1"/>
<polyline points="421,326 424,331 427,326" fill="none" stroke="#909090" stroke-width="1"/>
<polyline points="465.5,326 468.5,331 471.5,326" fill="none" stroke="#ffffff" stroke-width="1"/>
<polyline points="505,326 508,331 511,326" fill="none" stroke="#909090" stroke-width="1"/>
<polyline points="530,326 533,331 536,326" fill="none" stroke="#909090" stroke-width="1"/>
<polyline points="558.8,326 561.8,331 564.8,326" fill="none" stroke="#ffffff" stroke-width="1"/>
<polyline points="589,326 592,331 595,326" fill="none" stroke="#909090" stroke-width="1"/>
<polyline points="604,326 607,331 610,326" fill="none" stroke="#909090" stroke-width="1"/>
<polyline points="632.2,326 635.2,331 638.2,326" fill="none" stroke="#909090" stroke-width="1"/>
<polyline points="654,326 657,331 660,326" fill="none" stroke="#ffffff" stroke-width="1"/>
<polyline points="668.8,326 671.8,331 674.8,326" fill="none" stroke="#909090" stroke-width="1"/>
<polyline points="717.8,326 720.8,331 723.8,326" fill="none" stroke="#909090" stroke-width="1"/>
<polyline points="768.2,326 771.2,331 774.2,326" fill="none" stroke="#ffffff" stroke-width="1"/>
<polyline points="820.8,326 823.8,331 826.8,326" fill="none" stroke="#909090" stroke-width="1"/>
<polyline points="920,326 923,331 926,326" fill="none" stroke="#ffffff" stroke-width="1"/>
<polyline points="1033,326 1036,331 1039,326" fill="none" stroke="#ffffff" stroke-width="1"/>
<polyline points="1036.5,326 1039.5,331 1042.5,326" fill="none" stroke="#ffffff" stroke-width="1"/>
<polygon points="1039.5,326 1043,331.5 1046.5,326" fill="#999"/>
<polyline points="47.4,683 50.4,688 53.4,683" fill="none" stroke="#ffffff" stroke-width="1"/>
<polyline points="77.3,683 80.3,688 83.3,683" fill="none" stroke="#909090" stroke-width="1"/>
<polyline points="96,683 99,688 102,683" fill="none" stroke="#909090" stroke-width="1"/>
<polyline points="98.6,683 101.6,688 104.6,683" fill="none" stroke="#909090" stroke-width="1"/>
<polyline points="108,683 111,688 114,683" fill="none" stroke="#909090" stroke-width="1"/>
<polyline points="129.4,683 132.4,688 135.4,683" fill="none" stroke="#ffffff" stroke-width="1"/>
<polyline points="147,683 150,688 153,683" fill="none" stroke="#909090" stroke-width="1"/>
<polyline points="150,683 153,688 156,683" fill="none" stroke="#909090" stroke-width="1"/>
<polyline points="153,683 156,688 159,683" fill="none" stroke="#909090" stroke-width="1"/>
<polyline points="179,683 182,688 185,683" fill="none" stroke="#909090" stroke-width="1"/>
<polyline points="189,683 192,688 195,683" fill="none" stroke="#909090" stroke-width="1"/>
<polyline points="213.3,683 216.3,688 219.3,683" fill="none" stroke="#ffffff" stroke-width="1"/>
<polyline points="229.3,683 232.3,688 235.3,683" fill="none" stroke="#909090" stroke-width="1"/>
<polyline points="256.2,683 259.2,688 262.2,683" fill="none" stroke="#909090" stroke-width="1"/>
<polyline points="265,683 268,688 271,683" fill="none" stroke="#909090" stroke-width="1"/>
<polyline points="268.9,683 271.9,688 274.9,683" fill="none" stroke="#909090" stroke-width="1"/>
<polyline points="298,683 301,688 304,683" fill="none" stroke="#ffffff" stroke-width="1"/>
<polyline points="333,683 336,688 339,683" fill="none" stroke="#909090" stroke-width="1"/>
<polyline points="350,683 353,688 356,683" fill="none" stroke="#909090" stroke-width="1"/>
<polyline points="388,683 391,688 394,683" fill="none" stroke="#ffffff" stroke-width="1"/>
<polyline points="397.5,683 400.5,688 403.5,683" fill="none" stroke="#909090" stroke-width="1"/>
<polyline points="421,683 424,688 427,683" fill="none" stroke="#909090" stroke-width="1"/>
<polyline points="465.5,683 468.5,688 471.5,683" fill="none" stroke="#ffffff" stroke-width="1"/>
<polyline points="505,683 508,688 511,683" fill="none" stroke="#909090" stroke-width="1"/>
<polyline points="530,683 533,688 536,683" fill="none" stroke="#909090" stroke-width="1"/>
<polyline points="558.8,683 561.8,688 564.8,683" fill="none" stroke="#ffffff" stroke-width="1"/>
<polyline points="589,683 592,688 595,683" fill="none" stroke="#909090" stroke-width="1"/>
<polyline points="604,683 607,688 610,683" fill="none" stroke="#909090" stroke-width="1"/>
<polyline points="632.2,683 635.2,688 638.2,683" fill="none" stroke="#909090" stroke-width="1"/>
<polyline points="654,683 657,688 660,683" fill="none" stroke="#ffffff" stroke-width="1"/>
<polyline points="668.8,683 671.8,688 674.8,683" fill="none" stroke="#909090" stroke-width="1"/>
<polyline points="717.8,683 720.8,688 723.8,683" fill="none" stroke="#909090" stroke-width="1"/>
<polyline points="768.2,683 771.2,688 774.2,683" fill="none" stroke="#ffffff" stroke-width="1"/>
<polyline points="820.8,683 823.8,688 826.8,683" fill="none" stroke="#909090" stroke-width="1"/>
<polyline points="920,683 923,688 926,683" fill="none" stroke="#ffffff" stroke-width="1"/>
<polyline points="1033,683 1036,688 1039,683" fill="none" stroke="#ffffff" stroke-width="1"/>
<polyline points="1036.5,683 1039.5,688 1042.5,683" fill="none" stroke="#ffffff" stroke-width="1"/>
<polygon points="1039.5,683 1043,688.5 1046.5,683" fill="#999"/>
<g clip-path="url(#c2)">
<g fill="#0099ff">
<rect x="64" y="452" width="1" height="215"/><rect x="64" y="468" width="3" height="199"/><rect x="64" y="483" width="4" height="184"/><rect x="64" y="498" width="5" height="169"/><rect x="64" y="513" width="5" height="154"/><rect x="64" y="528" width="6" height="139"/><rect x="64" y="543" width="7" height="124"/><rect x="64" y="559" width="7" height="108"/><rect x="64" y="574" width="8" height="93"/><rect x="64" y="589" width="9" height="78"/><rect x="64" y="604" width="9" height="63"/><rect x="64" y="619" width="10" height="48"/><rect x="64" y="634" width="10" height="33"/><rect x="64" y="649" width="11" height="18"/><rect x="64" y="665" width="11" height="2"/>
<rect x="100" y="468" width="1" height="199"/><rect x="100" y="483" width="3" height="184"/><rect x="100" y="498" width="4" height="169"/><rect x="100" y="513" width="5" height="154"/><rect x="100" y="529" width="5" height="138"/><rect x="100" y="544" width="6" height="123"/><rect x="100" y="559" width="7" height="108"/><rect x="100" y="574" width="7" height="93"/><rect x="100" y="589" width="8" height="78"/><rect x="100" y="604" width="8" height="63"/><rect x="100" y="620" width="9" height="47"/><rect x="100" y="635" width="9" height="32"/><rect x="100" y="650" width="10" height="17"/><rect x="100" y="665" width="10" height="2"/>
<rect x="127" y="452" width="5" height="215"/><rect x="127" y="468" width="6" height="199"/><rect x="127" y="483" width="7" height="184"/><rect x="127" y="498" width="8" height="169"/><rect x="127" y="513" width="8" height="154"/><rect x="127" y="528" width="9" height="139"/><rect x="127" y="543" width="9" height="124"/><rect x="127" y="559" width="10" height="108"/><rect x="127" y="574" width="10" height="93"/><rect x="127" y="589" width="10" height="78"/><rect x="127" y="604" width="11" height="63"/><rect x="127" y="619" width="11" height="48"/><rect x="127" y="634" width="12" height="33"/><rect x="127" y="649" width="12" height="18"/><rect x="127" y="665" width="12" height="2"/>
<rect x="159" y="468" width="1" height="199"/><rect x="159" y="483" width="2" height="184"/><rect x="159" y="498" width="3" height="169"/><rect x="159" y="513" width="4" height="154"/><rect x="159" y="529" width="5" height="138"/><rect x="159" y="544" width="5" height="123"/><rect x="159" y="559" width="6" height="108"/><rect x="159" y="574" width="6" height="93"/><rect x="159" y="589" width="7" height="78"/><rect x="159" y="604" width="7" height="63"/><rect x="159" y="620" width="8" height="47"/><rect x="159" y="635" width="8" height="32"/><rect x="159" y="650" width="9" height="17"/><rect x="159" y="665" width="9" height="2"/>
<rect x="180" y="452" width="3" height="215"/><rect x="180" y="468" width="4" height="199"/><rect x="180" y="483" width="5" height="184"/><rect x="180" y="498" width="6" height="169"/><rect x="180" y="513" width="6" height="154"/><rect x="180" y="528" width="7" height="139"/><rect x="180" y="543" width="8" height="124"/><rect x="180" y="559" width="8" height="108"/><rect x="180" y="574" width="9" height="93"/><rect x="180" y="589" width="9" height="78"/><rect x="180" y="604" width="9" height="63"/><rect x="180" y="619" width="10" height="48"/><rect x="180" y="634" width="10" height="33"/><rect x="180" y="649" width="11" height="18"/><rect x="180" y="665" width="11" height="2"/>
<rect x="236" y="452" width="1" height="215"/><rect x="236" y="468" width="2" height="199"/><rect x="236" y="483" width="3" height="184"/><rect x="236" y="498" width="4" height="169"/><rect x="236" y="513" width="4" height="154"/><rect x="236" y="528" width="5" height="139"/><rect x="236" y="543" width="5" height="124"/><rect x="236" y="559" width="6" height="108"/><rect x="236" y="574" width="6" height="93"/><rect x="236" y="589" width="6" height="78"/><rect x="236" y="604" width="7" height="63"/><rect x="236" y="619" width="7" height="48"/><rect x="236" y="634" width="7" height="33"/><rect x="236" y="649" width="8" height="18"/><rect x="236" y="665" width="8" height="2"/>
<rect x="270" y="452" width="3" height="215"/><rect x="270" y="468" width="5" height="199"/><rect x="270" y="483" width="6" height="184"/><rect x="270" y="498" width="7" height="169"/><rect x="270" y="513" width="7" height="154"/><rect x="270" y="528" width="8" height="139"/><rect x="270" y="543" width="9" height="124"/><rect x="270" y="559" width="9" height="108"/><rect x="270" y="574" width="10" height="93"/><rect x="270" y="589" width="11" height="78"/><rect x="270" y="604" width="11" height="63"/><rect x="270" y="619" width="12" height="48"/><rect x="270" y="634" width="12" height="33"/><rect x="270" y="649" width="13" height="18"/><rect x="270" y="665" width="13" height="2"/>
<rect x="295" y="452" width="1" height="215"/><rect x="295" y="468" width="2" height="199"/><rect x="295" y="483" width="3" height="184"/><rect x="295" y="498" width="4" height="169"/><rect x="295" y="513" width="4" height="154"/><rect x="295" y="528" width="5" height="139"/><rect x="295" y="543" width="5" height="124"/><rect x="295" y="559" width="6" height="108"/><rect x="295" y="574" width="6" height="93"/><rect x="295" y="589" width="7" height="78"/><rect x="295" y="604" width="7" height="63"/><rect x="295" y="619" width="7" height="48"/><rect x="295" y="634" width="8" height="33"/><rect x="295" y="649" width="8" height="18"/><rect x="295" y="665" width="9" height="2"/>
<rect x="316" y="452" width="1" height="215"/><rect x="316" y="468" width="3" height="199"/><rect x="316" y="483" width="4" height="184"/><rect x="316" y="498" width="4" height="169"/><rect x="316" y="513" width="5" height="154"/><rect x="316" y="528" width="6" height="139"/><rect x="316" y="543" width="6" height="124"/><rect x="316" y="559" width="7" height="108"/><rect x="316" y="574" width="7" height="93"/><rect x="316" y="589" width="8" height="78"/><rect x="316" y="604" width="8" height="63"/><rect x="316" y="619" width="8" height="48"/><rect x="316" y="634" width="9" height="33"/><rect x="316" y="649" width="9" height="18"/><rect x="316" y="665" width="10" height="2"/>
<rect x="344" y="452" width="1" height="215"/><rect x="344" y="468" width="3" height="199"/><rect x="344" y="483" width="4" height="184"/><rect x="344" y="498" width="4" height="169"/><rect x="344" y="513" width="5" height="154"/><rect x="344" y="528" width="6" height="139"/><rect x="344" y="543" width="7" height="124"/><rect x="344" y="559" width="7" height="108"/><rect x="344" y="574" width="8" height="93"/><rect x="344" y="589" width="8" height="78"/><rect x="344" y="604" width="9" height="63"/><rect x="344" y="619" width="9" height="48"/><rect x="344" y="634" width="10" height="33"/><rect x="344" y="649" width="10" height="18"/><rect x="344" y="665" width="11" height="2"/>
<rect x="366" y="452" width="1" height="215"/><rect x="366" y="468" width="3" height="199"/><rect x="366" y="483" width="3" height="184"/><rect x="366" y="498" width="4" height="169"/><rect x="366" y="513" width="5" height="154"/><rect x="366" y="528" width="6" height="139"/><rect x="366" y="543" width="6" height="124"/><rect x="366" y="559" width="7" height="108"/><rect x="366" y="574" width="7" height="93"/><rect x="366" y="589" width="8" height="78"/><rect x="366" y="604" width="8" height="63"/><rect x="366" y="619" width="9" height="48"/><rect x="366" y="634" width="9" height="33"/><rect x="366" y="649" width="9" height="18"/><rect x="366" y="665" width="10" height="2"/>
<rect x="393" y="452" width="1" height="215"/><rect x="393" y="468" width="3" height="199"/><rect x="393" y="483" width="4" height="184"/><rect x="393" y="498" width="4" height="169"/><rect x="393" y="513" width="5" height="154"/><rect x="393" y="528" width="6" height="139"/><rect x="393" y="543" width="6" height="124"/><rect x="393" y="559" width="7" height="108"/><rect x="393" y="574" width="7" height="93"/><rect x="393" y="589" width="8" height="78"/><rect x="393" y="604" width="8" height="63"/><rect x="393" y="619" width="8" height="48"/><rect x="393" y="634" width="9" height="33"/><rect x="393" y="649" width="9" height="18"/><rect x="393" y="665" width="10" height="2"/>
<rect x="415" y="452" width="1" height="215"/><rect x="415" y="468" width="3" height="199"/><rect x="415" y="483" width="4" height="184"/><rect x="415" y="498" width="4" height="169"/><rect x="415" y="513" width="5" height="154"/><rect x="415" y="528" width="6" height="139"/><rect x="415" y="543" width="6" height="124"/><rect x="415" y="559" width="7" height="108"/><rect x="415" y="574" width="7" height="93"/><rect x="415" y="589" width="8" height="78"/><rect x="415" y="604" width="8" height="63"/><rect x="415" y="619" width="8" height="48"/><rect x="415" y="634" width="9" height="33"/><rect x="415" y="649" width="9" height="18"/><rect x="415" y="665" width="10" height="2"/>
<rect x="438" y="452" width="3" height="215"/><rect x="438" y="468" width="4" height="199"/><rect x="438" y="483" width="5" height="184"/><rect x="438" y="498" width="6" height="169"/><rect x="438" y="513" width="6" height="154"/><rect x="438" y="528" width="7" height="139"/><rect x="438" y="543" width="7" height="124"/><rect x="438" y="559" width="8" height="108"/><rect x="438" y="574" width="8" height="93"/><rect x="438" y="589" width="9" height="78"/><rect x="438" y="604" width="9" height="63"/><rect x="438" y="619" width="9" height="48"/><rect x="438" y="634" width="10" height="33"/><rect x="438" y="649" width="10" height="18"/><rect x="438" y="665" width="10" height="2"/>
<rect x="463" y="452" width="1" height="215"/><rect x="463" y="468" width="2" height="199"/><rect x="463" y="483" width="3" height="184"/><rect x="463" y="498" width="4" height="169"/><rect x="463" y="513" width="5" height="154"/><rect x="463" y="528" width="5" height="139"/><rect x="463" y="543" width="6" height="124"/><rect x="463" y="559" width="6" height="108"/><rect x="463" y="574" width="7" height="93"/><rect x="463" y="589" width="7" height="78"/><rect x="463" y="604" width="8" height="63"/><rect x="463" y="619" width="8" height="48"/><rect x="463" y="634" width="8" height="33"/><rect x="463" y="649" width="9" height="18"/><rect x="463" y="665" width="9" height="2"/>
<rect x="487" y="452" width="1" height="215"/><rect x="487" y="468" width="2" height="199"/><rect x="487" y="483" width="3" height="184"/><rect x="487" y="498" width="4" height="169"/><rect x="487" y="513" width="5" height="154"/><rect x="487" y="528" width="5" height="139"/><rect x="487" y="543" width="6" height="124"/><rect x="487" y="559" width="6" height="108"/><rect x="487" y="574" width="7" height="93"/><rect x="487" y="589" width="7" height="78"/><rect x="487" y="604" width="8" height="63"/><rect x="487" y="619" width="8" height="48"/><rect x="487" y="634" width="9" height="33"/><rect x="487" y="649" width="9" height="18"/><rect x="487" y="665" width="10" height="2"/>
<rect x="511" y="452" width="1" height="215"/><rect x="511" y="468" width="2" height="199"/><rect x="511" y="483" width="3" height="184"/><rect x="511" y="498" width="4" height="169"/><rect x="511" y="513" width="5" height="154"/><rect x="511" y="528" width="6" height="139"/><rect x="511" y="543" width="6" height="124"/><rect x="511" y="559" width="7" height="108"/><rect x="511" y="574" width="7" height="93"/><rect x="511" y="589" width="8" height="78"/><rect x="511" y="604" width="8" height="63"/><rect x="511" y="619" width="9" height="48"/><rect x="511" y="634" width="9" height="33"/><rect x="511" y="649" width="10" height="18"/><rect x="511" y="665" width="10" height="2"/>
<rect x="535" y="452" width="1" height="215"/><rect x="535" y="468" width="2" height="199"/><rect x="535" y="483" width="3" height="184"/><rect x="535" y="498" width="4" height="169"/><rect x="535" y="513" width="5" height="154"/><rect x="535" y="528" width="5" height="139"/><rect x="535" y="543" width="6" height="124"/><rect x="535" y="559" width="6" height="108"/><rect x="535" y="574" width="7" height="93"/><rect x="535" y="589" width="7" height="78"/><rect x="535" y="604" width="8" height="63"/><rect x="535" y="619" width="8" height="48"/><rect x="535" y="634" width="8" height="33"/><rect x="535" y="649" width="9" height="18"/><rect x="535" y="665" width="9" height="2"/>
<rect x="561" y="452" width="1" height="215"/><rect x="561" y="468" width="3" height="199"/><rect x="561" y="483" width="4" height="184"/><rect x="561" y="498" width="4" height="169"/><rect x="561" y="513" width="5" height="154"/><rect x="561" y="528" width="5" height="139"/><rect x="561" y="543" width="6" height="124"/><rect x="561" y="559" width="6" height="108"/><rect x="561" y="574" width="7" height="93"/><rect x="561" y="589" width="7" height="78"/><rect x="561" y="604" width="8" height="63"/><rect x="561" y="619" width="8" height="48"/><rect x="561" y="634" width="8" height="33"/><rect x="561" y="649" width="9" height="18"/><rect x="561" y="665" width="9" height="2"/>
<rect x="583" y="452" width="1" height="215"/><rect x="583" y="468" width="3" height="199"/><rect x="583" y="483" width="4" height="184"/><rect x="583" y="498" width="4" height="169"/><rect x="583" y="513" width="5" height="154"/><rect x="583" y="528" width="6" height="139"/><rect x="583" y="543" width="6" height="124"/><rect x="583" y="559" width="7" height="108"/><rect x="583" y="574" width="7" height="93"/><rect x="583" y="589" width="8" height="78"/><rect x="583" y="604" width="8" height="63"/><rect x="583" y="619" width="8" height="48"/><rect x="583" y="634" width="9" height="33"/><rect x="583" y="649" width="9" height="18"/><rect x="583" y="665" width="10" height="2"/>
<rect x="614" y="468" width="1" height="199"/><rect x="614" y="483" width="3" height="184"/><rect x="614" y="498" width="3" height="169"/><rect x="614" y="513" width="4" height="154"/><rect x="614" y="529" width="4" height="138"/><rect x="614" y="544" width="5" height="123"/><rect x="614" y="559" width="5" height="108"/><rect x="614" y="574" width="6" height="93"/><rect x="614" y="589" width="6" height="78"/><rect x="614" y="604" width="7" height="63"/><rect x="614" y="620" width="7" height="47"/><rect x="614" y="635" width="8" height="32"/><rect x="614" y="650" width="8" height="17"/><rect x="614" y="665" width="8" height="2"/>
<rect x="639" y="452" width="1" height="215"/><rect x="639" y="468" width="3" height="199"/><rect x="639" y="483" width="4" height="184"/><rect x="639" y="498" width="4" height="169"/><rect x="639" y="513" width="5" height="154"/><rect x="639" y="528" width="6" height="139"/><rect x="639" y="543" width="6" height="124"/><rect x="639" y="559" width="7" height="108"/><rect x="639" y="574" width="7" height="93"/><rect x="639" y="589" width="8" height="78"/><rect x="639" y="604" width="8" height="63"/><rect x="639" y="619" width="9" height="48"/><rect x="639" y="634" width="9" height="33"/><rect x="639" y="649" width="10" height="18"/><rect x="639" y="665" width="10" height="2"/>
<rect x="664" y="452" width="1" height="215"/><rect x="664" y="468" width="3" height="199"/><rect x="664" y="483" width="3" height="184"/><rect x="664" y="498" width="4" height="169"/><rect x="664" y="513" width="5" height="154"/><rect x="664" y="528" width="5" height="139"/><rect x="664" y="543" width="6" height="124"/><rect x="664" y="559" width="6" height="108"/><rect x="664" y="574" width="7" height="93"/><rect x="664" y="589" width="7" height="78"/><rect x="664" y="604" width="8" height="63"/><rect x="664" y="619" width="8" height="48"/><rect x="664" y="634" width="9" height="33"/><rect x="664" y="649" width="9" height="18"/><rect x="664" y="665" width="9" height="2"/>
<rect x="686" y="452" width="2" height="215"/><rect x="686" y="468" width="3" height="199"/><rect x="686" y="483" width="3" height="184"/><rect x="686" y="498" width="3" height="169"/><rect x="686" y="513" width="3" height="154"/><rect x="686" y="528" width="4" height="139"/><rect x="686" y="543" width="4" height="124"/><rect x="686" y="559" width="4" height="108"/><rect x="686" y="574" width="4" height="93"/><rect x="686" y="589" width="4" height="78"/><rect x="686" y="604" width="4" height="63"/><rect x="686" y="619" width="5" height="48"/><rect x="686" y="634" width="5" height="33"/><rect x="686" y="649" width="5" height="18"/><rect x="686" y="665" width="5" height="2"/>
<rect x="710" y="452" width="1" height="215"/><rect x="710" y="468" width="3" height="199"/><rect x="710" y="483" width="4" height="184"/><rect x="710" y="498" width="4" height="169"/><rect x="710" y="513" width="5" height="154"/><rect x="710" y="528" width="6" height="139"/><rect x="710" y="543" width="7" height="124"/><rect x="710" y="559" width="7" height="108"/><rect x="710" y="574" width="8" height="93"/><rect x="710" y="589" width="8" height="78"/><rect x="710" y="604" width="9" height="63"/><rect x="710" y="619" width="9" height="48"/><rect x="710" y="634" width="10" height="33"/><rect x="710" y="649" width="10" height="18"/><rect x="710" y="665" width="11" height="2"/>
<rect x="746" y="453" width="1" height="214"/><rect x="746" y="468" width="3" height="199"/><rect x="746" y="483" width="4" height="184"/><rect x="746" y="498" width="5" height="169"/><rect x="746" y="514" width="6" height="153"/><rect x="746" y="529" width="6" height="138"/><rect x="746" y="544" width="7" height="123"/><rect x="746" y="559" width="8" height="108"/><rect x="746" y="574" width="8" height="93"/><rect x="746" y="589" width="9" height="78"/><rect x="746" y="604" width="9" height="63"/><rect x="746" y="620" width="10" height="47"/><rect x="746" y="635" width="11" height="32"/><rect x="746" y="650" width="11" height="17"/><rect x="746" y="665" width="12" height="2"/>
<rect x="818" y="453" width="1" height="214"/><rect x="818" y="468" width="3" height="199"/><rect x="818" y="483" width="4" height="184"/><rect x="818" y="498" width="5" height="169"/><rect x="818" y="514" width="6" height="153"/><rect x="818" y="529" width="6" height="138"/><rect x="818" y="544" width="7" height="123"/><rect x="818" y="559" width="8" height="108"/><rect x="818" y="574" width="8" height="93"/><rect x="818" y="589" width="9" height="78"/><rect x="818" y="604" width="9" height="63"/><rect x="818" y="620" width="10" height="47"/><rect x="818" y="635" width="10" height="32"/><rect x="818" y="650" width="11" height="17"/><rect x="818" y="665" width="11" height="2"/>
<rect x="253" y="605" width="1" height="62"/><rect x="253" y="621" width="3" height="46"/><rect x="253" y="636" width="5" height="31"/><rect x="253" y="651" width="6" height="16"/><rect x="253" y="666" width="7" height="1"/>
<rect x="703" y="544" width="1" height="123"/><rect x="703" y="559" width="2" height="108"/><rect x="703" y="574" width="3" height="93"/><rect x="703" y="589" width="4" height="78"/><rect x="703" y="605" width="4" height="62"/><rect x="703" y="620" width="5" height="47"/><rect x="703" y="635" width="6" height="32"/><rect x="703" y="650" width="6" height="17"/><rect x="703" y="665" width="6" height="2"/>
<rect x="1032" y="514" width="3" height="153"/><rect x="1032" y="529" width="4" height="138"/><rect x="1032" y="544" width="5" height="123"/><rect x="1032" y="559" width="6" height="108"/><rect x="1032" y="575" width="6" height="92"/><rect x="1032" y="590" width="7" height="77"/><rect x="1032" y="605" width="7" height="62"/><rect x="1032" y="620" width="8" height="47"/><rect x="1032" y="635" width="8" height="32"/><rect x="1032" y="650" width="9" height="17"/><rect x="1032" y="666" width="9" height="1"/>
<rect x="46" y="452.5" width="1" height="214.5"/>
<rect x="48" y="452.5" width="1" height="214.5"/>
<rect x="51" y="452.5" width="1" height="214.5"/>
<rect x="148" y="620" width="1" height="47"/>
<rect x="153" y="452.5" width="2" height="214.5"/>
<rect x="178" y="452.5" width="1" height="214.5"/>
<rect x="195" y="635" width="1" height="32"/>
<rect x="216" y="452.5" width="1" height="214.5"/>
<rect x="220" y="452.5" width="2" height="214.5"/>
<rect x="228" y="452.5" width="1" height="214.5"/>
<rect x="230" y="452.5" width="2" height="214.5"/>
<rect x="234" y="452.5" width="1" height="214.5"/>
<rect x="263" y="452.5" width="3" height="214.5"/>
<rect x="267" y="650" width="1" height="17"/>
<rect x="283" y="650" width="1" height="17"/>
<rect x="312" y="635" width="1" height="32"/>
<rect x="339" y="605" width="1" height="62"/>
<rect x="386" y="635" width="1" height="32"/>
<rect x="411" y="620" width="1" height="47"/>
<rect x="482" y="620" width="1" height="47"/>
<rect x="559" y="650" width="1" height="17"/>
<rect x="603" y="635" width="1" height="32"/>
<rect x="607" y="452.5" width="1" height="214.5"/>
<rect x="610" y="452.5" width="1" height="214.5"/>
<rect x="657" y="620" width="1" height="47"/>
<rect x="682" y="635" width="1" height="32"/>
<rect x="438" y="452.5" width="1" height="214.5"/>
<rect x="11" y="672" width="1" height="10"/>
<rect x="16" y="635" width="1" height="32"/>
<rect x="20" y="650" width="1" height="17"/>
<rect x="209" y="650" width="1" height="17"/>
<rect x="257" y="640" width="1" height="27"/>
<rect x="263" y="640" width="3" height="27"/>
<rect x="852" y="438" width="1" height="229"/>
<rect x="855" y="438" width="1" height="229"/>
<rect x="857" y="453" width="1" height="214"/>
<rect x="1011" y="514" width="1" height="153"/>
<rect x="783" y="453" width="1" height="214"/>
<rect x="787" y="453" width="1" height="214"/>
<rect x="828" y="650" width="8" height="17"/>
<rect x="833" y="636" width="2" height="31"/>
<rect x="773" y="652" width="7" height="15"/>
<rect x="816" y="650" width="2" height="17"/>
<rect x="846" y="650" width="6" height="17"/>
<rect x="1008" y="544" width="2" height="123"/>
<rect x="1009" y="530" width="1" height="137"/>
<rect x="857" y="530" width="4" height="14"/>
<rect x="875" y="530" width="12" height="14"/>
<rect x="896" y="530" width="2" height="14"/>
<rect x="900" y="530" width="8" height="14"/>
<rect x="923" y="530" width="1" height="14"/>
<rect x="925" y="530" width="12" height="14"/>
<rect x="950" y="530" width="7" height="14"/>
<rect x="959" y="530" width="3" height="14"/>
<rect x="968" y="530" width="3" height="14"/>
<rect x="974" y="530" width="6" height="14"/>
<rect x="984" y="530" width="2" height="14"/>
<rect x="990" y="530" width="6" height="14"/>
<rect x="1009" y="530" width="1" height="14"/>
<rect x="857" y="544" width="5" height="15"/>
<rect x="874" y="544" width="14" height="15"/>
<rect x="895" y="544" width="13" height="15"/>
<rect x="912" y="544" width="1" height="15"/>
<rect x="921" y="544" width="17" height="15"/>
<rect x="946" y="544" width="1" height="15"/>
<rect x="949" y="544" width="9" height="15"/>
<rect x="959" y="544" width="4" height="15"/>
<rect x="966" y="544" width="6" height="15"/>
<rect x="974" y="544" width="7" height="15"/>
<rect x="984" y="544" width="3" height="15"/>
<rect x="988" y="544" width="9" height="15"/>
<rect x="999" y="544" width="3" height="15"/>
<rect x="1008" y="544" width="2" height="15"/>
<rect x="857" y="559" width="5" height="15"/>
<rect x="874" y="559" width="15" height="15"/>
<rect x="894" y="559" width="15" height="15"/>
<rect x="911" y="559" width="2" height="15"/>
<rect x="921" y="559" width="17" height="15"/>
<rect x="944" y="559" width="19" height="15"/>
<rect x="966" y="559" width="15" height="15"/>
<rect x="983" y="559" width="19" height="15"/>
<rect x="1008" y="559" width="2" height="15"/>
<rect x="857" y="574" width="6" height="16"/>
<rect x="873" y="574" width="16" height="16"/>
<rect x="892" y="574" width="1" height="16"/>
<rect x="894" y="574" width="20" height="16"/>
<rect x="918" y="574" width="1" height="16"/>
<rect x="920" y="574" width="19" height="16"/>
<rect x="943" y="574" width="61" height="16"/>
<rect x="1007" y="574" width="3" height="16"/>
<rect x="857" y="590" width="7" height="15"/>
<rect x="872" y="590" width="43" height="15"/>
<rect x="918" y="590" width="22" height="15"/>
<rect x="943" y="590" width="61" height="15"/>
<rect x="1006" y="590" width="4" height="15"/>
<rect x="857" y="605" width="8" height="15"/>
<rect x="871" y="605" width="44" height="15"/>
<rect x="917" y="605" width="23" height="15"/>
<rect x="942" y="605" width="68" height="15"/>
<rect x="857" y="620" width="9" height="31"/>
<rect x="870" y="620" width="140" height="31"/>
<rect x="857" y="651" width="10" height="14"/>
<rect x="870" y="651" width="140" height="14"/>
<rect x="857" y="665" width="153" height="2"/>
<rect x="857" y="514" width="4" height="16"/>
<rect x="875" y="514" width="11" height="16"/>
<rect x="900" y="514" width="7" height="16"/>
<rect x="923" y="514" width="1" height="16"/>
<rect x="925" y="514" width="7" height="16"/>
<rect x="932" y="514" width="1" height="16"/>
<rect x="935" y="514" width="1" height="16"/>
<rect x="950" y="514" width="7" height="16"/>
<rect x="960" y="514" width="2" height="16"/>
<rect x="968" y="514" width="3" height="16"/>
<rect x="975" y="514" width="4" height="16"/>
<rect x="990" y="514" width="5" height="16"/>
<rect x="1010" y="514" width="1" height="16"/>
<rect x="857" y="499" width="3" height="15"/>
<rect x="876" y="499" width="10" height="15"/>
<rect x="901" y="499" width="5" height="15"/>
<rect x="926" y="499" width="5" height="15"/>
<rect x="932" y="499" width="1" height="15"/>
<rect x="951" y="499" width="5" height="15"/>
<rect x="969" y="499" width="1" height="15"/>
<rect x="976" y="499" width="2" height="15"/>
<rect x="991" y="499" width="4" height="15"/>
<rect x="857" y="484" width="3" height="15"/>
<rect x="877" y="484" width="8" height="15"/>
<rect x="902" y="484" width="4" height="15"/>
<rect x="927" y="484" width="3" height="15"/>
<rect x="952" y="484" width="3" height="15"/>
<rect x="992" y="484" width="2" height="15"/>
<rect x="857" y="468" width="2" height="16"/>
<rect x="878" y="468" width="6" height="16"/>
<rect x="904" y="468" width="1" height="16"/>
<rect x="927" y="468" width="3" height="16"/>
<rect x="952" y="468" width="1" height="16"/>
<rect x="954" y="468" width="1" height="16"/>
<rect x="992" y="468" width="1" height="16"/>
<rect x="857" y="453" width="1" height="15"/>
<rect x="878" y="453" width="6" height="15"/>
<rect x="928" y="453" width="1" height="15"/>
<rect x="879" y="438" width="4" height="15"/>
<rect x="880" y="423" width="2" height="15"/>
</g>
<g fill="#ff9900">
<rect x="12" y="665" width="17" height="17"/>
<rect x="40" y="665" width="20" height="17"/>
<rect x="62" y="665" width="1" height="17"/>
<rect x="64" y="665" width="17" height="17"/>
<rect x="91" y="665" width="20" height="17"/>
<rect x="98" y="650" width="13" height="32"/>
<rect x="96" y="650" width="1" height="32"/>
<rect x="225" y="650" width="1" height="32"/>
<rect x="122" y="650" width="17" height="32"/>
<rect x="148" y="650" width="6" height="32"/>
<rect x="159" y="650" width="9" height="32"/>
<rect x="176" y="650" width="6" height="32"/>
<rect x="182" y="665" width="16" height="17"/>
<rect x="209" y="665" width="34" height="17"/>
<rect x="253" y="665" width="31" height="17"/>
<rect x="294" y="665" width="10" height="17"/>
<rect x="312" y="665" width="13" height="17"/>
<rect x="339" y="665" width="17" height="17"/>
<rect x="366" y="665" width="9" height="17"/>
<rect x="386" y="665" width="5" height="17"/>
<rect x="393" y="665" width="8" height="17"/>
<rect x="411" y="665" width="15" height="17"/>
<rect x="438" y="665" width="13" height="17"/>
<rect x="462" y="665" width="9" height="17"/>
<rect x="482" y="665" width="15" height="17"/>
<rect x="508" y="665" width="13" height="17"/>
<rect x="533" y="665" width="13" height="17"/>
<rect x="558" y="665" width="15" height="17"/>
<rect x="583" y="665" width="9" height="17"/>
<rect x="603" y="665" width="3" height="17"/>
<rect x="607" y="665" width="2" height="17"/>
<rect x="611" y="665" width="2" height="17"/>
<rect x="614" y="665" width="11" height="17"/>
<rect x="638" y="665" width="9" height="17"/>
<rect x="657" y="665" width="5" height="17"/>
<rect x="663" y="665" width="9" height="17"/>
<rect x="682" y="665" width="9" height="17"/>
<rect x="702" y="665" width="18" height="17"/>
<rect x="732" y="665" width="8" height="17"/>
<rect x="746" y="665" width="18" height="17"/>
<rect x="773" y="665" width="19" height="17"/>
<rect x="803" y="665" width="13" height="17"/>
<rect x="818" y="665" width="18" height="17"/>
<rect x="848" y="665" width="167" height="17"/>
<rect x="1032" y="665" width="12" height="17"/>
<rect x="734" y="423" width="6" height="259"/>
<rect x="735" y="408" width="1" height="274"/>
<rect x="737" y="408" width="1" height="274"/>
<rect x="747" y="423" width="1" height="259"/>
<rect x="759" y="423" width="2" height="259"/>
<rect x="762" y="423" width="2" height="259"/>
<rect x="774" y="423" width="2" height="259"/>
<rect x="777" y="423" width="2" height="259"/>
<rect x="780" y="423" width="3" height="259"/>
<rect x="784" y="423" width="3" height="259"/>
<rect x="788" y="423" width="4" height="259"/>
<rect x="803" y="423" width="9" height="259"/>
<rect x="813" y="423" width="2" height="259"/>
<rect x="815" y="438" width="1" height="244"/>
<rect x="819" y="438" width="1" height="244"/>
<rect x="831" y="438" width="2" height="244"/>
<rect x="834" y="438" width="1" height="244"/>
<rect x="847" y="438" width="1" height="244"/>
<rect x="849" y="438" width="2" height="244"/>
<rect x="853" y="438" width="2" height="244"/>
<rect x="856" y="438" width="1" height="244"/>
<rect x="1010" y="438" width="1" height="244"/>
<rect x="1012" y="438" width="3" height="244"/>
<rect x="1033" y="438" width="1" height="244"/>
<rect x="1041" y="438" width="1" height="244"/>
</g>
<rect x="78" y="452.5" width="1" height="229.5" fill="#dd3300"/>
<rect x="736" y="408" width="1" height="30" fill="#000"/>
<rect x="49" y="672" width="1" height="10" fill="#000"/>
<rect x="59" y="672" width="1" height="10" fill="#000"/>
<rect x="215" y="672" width="1" height="10" fill="#000"/>
<rect x="234" y="672" width="1" height="10" fill="#000"/>
<rect x="262" y="672" width="1" height="10" fill="#000"/>
<rect x="269" y="672" width="1" height="10" fill="#000"/>
<rect x="392" y="672" width="1" height="10" fill="#000"/>
<polygon points="6.3,659 12.3,659 16.3,663 16.3,669 12.3,673 6.3,673 2.3,669 2.3,663" fill="#fff"/>
<polygon points="27.3,659 33.3,659 37.3,663 37.3,669 33.3,673 27.3,673 23.3,669 23.3,663" fill="#fff"/>
<polygon points="35.3,659 41.3,659 45.3,663 45.3,669 41.3,673 35.3,673 31.3,669 31.3,663" fill="#fff"/>
<polygon points="35.9,659 41.9,659 45.9,663 45.9,669 41.9,673 35.9,673 31.9,669 31.9,663" fill="#fff"/>
<polygon points="45.9,659 51.9,659 55.9,663 55.9,669 51.9,673 45.9,673 41.9,669 41.9,663" fill="#fff"/>
<polygon points="55.9,659 61.9,659 65.9,663 65.9,669 61.9,673 55.9,673 51.9,669 51.9,663" fill="#fff"/>
<polygon points="59,659 65,659 69,663 69,669 65,673 59,673 55,669 55,663" fill="#fff"/>
<polygon points="59,659 65,659 69,663 69,669 65,673 59,673 55,669 55,663" fill="#fff"/>
<polygon points="59.8,659 65.8,659 69.8,663 69.8,669 65.8,673 59.8,673 55.8,669 55.8,663" fill="#fff"/>
<polygon points="79,659 85,659 89,663 89,669 85,673 79,673 75,669 75,663" fill="#fff"/>
<polygon points="83,659 89,659 93,663 93,669 89,673 83,673 79,669 79,663" fill="#fff"/>
<polygon points="88.4,659 94.4,659 98.4,663 98.4,669 94.4,673 88.4,673 84.4,669 84.4,663" fill="#fff"/>
<polygon points="96.9,659 102.9,659 106.9,663 106.9,669 102.9,673 96.9,673 92.9,669 92.9,663" fill="#fff"/>
<polygon points="97.9,659 103.9,659 107.9,663 107.9,669 103.9,673 97.9,673 93.9,669 93.9,663" fill="#fff"/>
<polygon points="107.4,659 113.4,659 117.4,663 117.4,669 113.4,673 107.4,673 103.4,669 103.4,663" fill="#fff"/>
<polygon points="111.5,659 117.5,659 121.5,663 121.5,669 117.5,673 111.5,673 107.5,669 107.5,663" fill="#fff"/>
<polygon points="116.7,659 122.7,659 126.7,663 126.7,669 122.7,673 116.7,673 112.7,669 112.7,663" fill="#fff"/>
<polygon points="118.9,659 124.9,659 128.9,663 128.9,669 124.9,673 118.9,673 114.9,669 114.9,663" fill="#fff"/>
<polygon points="127.5,659 133.5,659 137.5,663 137.5,669 133.5,673 127.5,673 123.5,669 123.5,663" fill="#fff"/>
<polygon points="136,659 142,659 146,663 146,669 142,673 136,673 132,669 132,663" fill="#fff"/>
<polygon points="139.5,659 145.5,659 149.5,663 149.5,669 145.5,673 139.5,673 135.5,669 135.5,663" fill="#fff"/>
<polygon points="143.8,659 149.8,659 153.8,663 153.8,669 149.8,673 143.8,673 139.8,669 139.8,663" fill="#fff"/>
<polygon points="152.7,659 158.7,659 162.7,663 162.7,669 158.7,673 152.7,673 148.7,669 148.7,663" fill="#fff"/>
<polygon points="153,659 159,659 163,663 163,669 159,673 153,673 149,669 149,663" fill="#fff"/>
<polygon points="154,659 160,659 164,663 164,669 160,673 154,673 150,669 150,663" fill="#fff"/>
<polygon points="164,659 170,659 174,663 174,669 170,673 164,673 160,669 160,663" fill="#fff"/>
<polygon points="168,659 174,659 178,663 178,669 174,673 168,673 164,669 164,663" fill="#fff"/>
<polygon points="172.7,659 178.7,659 182.7,663 182.7,669 178.7,673 172.7,673 168.7,669 168.7,663" fill="#fff"/>
<polygon points="194.6,659 200.6,659 204.6,663 204.6,669 200.6,673 194.6,673 190.6,669 190.6,663" fill="#fff"/>
<polygon points="198.5,659 204.5,659 208.5,663 208.5,669 204.5,673 198.5,673 194.5,669 194.5,663" fill="#fff"/>
<polygon points="204.7,659 210.7,659 214.7,663 214.7,669 210.7,673 204.7,673 200.7,669 200.7,663" fill="#fff"/>
<polygon points="211.7,659 217.7,659 221.7,663 221.7,669 217.7,673 211.7,673 207.7,669 207.7,663" fill="#fff"/>
<polygon points="229.7,659 235.7,659 239.7,663 239.7,669 235.7,673 229.7,673 225.7,669 225.7,663" fill="#fff"/>
<polygon points="229.7,659 235.7,659 239.7,663 239.7,669 235.7,673 229.7,673 225.7,669 225.7,663" fill="#fff"/>
<polygon points="239.7,659 245.7,659 249.7,663 249.7,669 245.7,673 239.7,673 235.7,669 235.7,663" fill="#fff"/>
<polygon points="243,659 249,659 253,663 253,669 249,673 243,673 239,669 239,663" fill="#fff"/>
<polygon points="248.6,659 254.6,659 258.6,663 258.6,669 254.6,673 248.6,673 244.6,669 244.6,663" fill="#fff"/>
<polygon points="257.5,659 263.5,659 267.5,663 267.5,669 263.5,673 257.5,673 253.5,669 253.5,663" fill="#fff"/>
<polygon points="265,659 271,659 275,663 275,669 271,673 265,673 261,669 261,663" fill="#fff"/>
<polygon points="279.7,659 285.7,659 289.7,663 289.7,669 285.7,673 279.7,673 275.7,669 275.7,663" fill="#fff"/>
<polygon points="284,659 290,659 294,663 294,669 290,673 284,673 280,669 280,663" fill="#fff"/>
<polygon points="290.5,659 296.5,659 300.5,663 300.5,669 296.5,673 290.5,673 286.5,669 286.5,663" fill="#fff"/>
<polygon points="299.3,659 305.3,659 309.3,663 309.3,669 305.3,673 299.3,673 295.3,669 295.3,663" fill="#fff"/>
<polygon points="303.5,659 309.5,659 313.5,663 313.5,669 309.5,673 303.5,673 299.5,669 299.5,663" fill="#fff"/>
<polygon points="308.9,659 314.9,659 318.9,663 318.9,669 314.9,673 308.9,673 304.9,669 304.9,663" fill="#fff"/>
<polygon points="322,659 328,659 332,663 332,669 328,673 322,673 318,669 318,663" fill="#fff"/>
<polygon points="327,659 333,659 337,663 337,669 333,673 327,673 323,669 323,663" fill="#fff"/>
<polygon points="334.9,659 340.9,659 344.9,663 344.9,669 340.9,673 334.9,673 330.9,669 330.9,663" fill="#fff"/>
<polygon points="340.3,659 346.3,659 350.3,663 350.3,669 346.3,673 340.3,673 336.3,669 336.3,663" fill="#fff"/>
<polygon points="352,659 358,659 362,663 362,669 358,673 352,673 348,669 348,663" fill="#fff"/>
<polygon points="355,659 361,659 365,663 365,669 361,673 355,673 351,669 351,663" fill="#fff"/>
<polygon points="361.3,659 367.3,659 371.3,663 371.3,669 367.3,673 361.3,673 357.3,669 357.3,663" fill="#fff"/>
<polygon points="372,659 378,659 382,663 382,669 378,673 372,673 368,669 368,663" fill="#fff"/>
<polygon points="376,659 382,659 386,663 386,669 382,673 376,673 372,669 372,663" fill="#fff"/>
<polygon points="382,659 388,659 392,663 392,669 388,673 382,673 378,669 378,663" fill="#fff"/>
<polygon points="388.3,659 394.3,659 398.3,663 398.3,669 394.3,673 388.3,673 384.3,669 384.3,663" fill="#fff"/>
<polygon points="397.3,659 403.3,659 407.3,663 407.3,669 403.3,673 397.3,673 393.3,669 393.3,663" fill="#fff"/>
<polygon points="401,659 407,659 411,663 411,669 407,673 401,673 397,669 397,663" fill="#fff"/>
<polygon points="407.3,659 413.3,659 417.3,663 417.3,669 413.3,673 407.3,673 403.3,669 403.3,663" fill="#fff"/>
<polygon points="422.7,659 428.7,659 432.7,663 432.7,669 428.7,673 422.7,673 418.7,669 418.7,663" fill="#fff"/>
<polygon points="427,659 433,659 437,663 437,669 433,673 427,673 423,669 423,663" fill="#fff"/>
<polygon points="433.6,659 439.6,659 443.6,663 443.6,669 439.6,673 433.6,673 429.6,669 429.6,663" fill="#fff"/>
<polygon points="448,659 454,659 458,663 458,669 454,673 448,673 444,669 444,663" fill="#fff"/>
<polygon points="452,659 458,659 462,663 462,669 458,673 452,673 448,669 448,663" fill="#fff"/>
<polygon points="458,659 464,659 468,663 468,669 464,673 458,673 454,669 454,663" fill="#fff"/>
<polygon points="468,659 474,659 478,663 478,669 474,673 468,673 464,669 464,663" fill="#fff"/>
<polygon points="473,659 479,659 483,663 483,669 479,673 473,673 469,669 469,663" fill="#fff"/>
<polygon points="479,659 485,659 489,663 489,669 485,673 479,673 475,669 475,663" fill="#fff"/>
<polygon points="492.5,659 498.5,659 502.5,663 502.5,669 498.5,673 492.5,673 488.5,669 488.5,663" fill="#fff"/>
<polygon points="497,659 503,659 507,663 507,669 503,673 497,673 493,669 493,663" fill="#fff"/>
<polygon points="503.4,659 509.4,659 513.4,663 513.4,669 509.4,673 503.4,673 499.4,669 499.4,663" fill="#fff"/>
<polygon points="517,659 523,659 527,663 527,669 523,673 517,673 513,669 513,663" fill="#fff"/>
<polygon points="522,659 528,659 532,663 532,669 528,673 522,673 518,669 518,663" fill="#fff"/>
<polygon points="528.8,659 534.8,659 538.8,663 538.8,669 534.8,673 528.8,673 524.8,669 524.8,663" fill="#fff"/>
<polygon points="541.5,659 547.5,659 551.5,663 551.5,669 547.5,673 541.5,673 537.5,669 537.5,663" fill="#fff"/>
<polygon points="546,659 552,659 556,663 556,669 552,673 546,673 542,669 542,663" fill="#fff"/>
<polygon points="549,659 555,659 559,663 559,669 555,673 549,673 545,669 545,663" fill="#fff"/>
<polygon points="554.5,659 560.5,659 564.5,663 564.5,669 560.5,673 554.5,673 550.5,669 550.5,663" fill="#fff"/>
<polygon points="570.6,659 576.6,659 580.6,663 580.6,669 576.6,673 570.6,673 566.6,669 566.6,663" fill="#fff"/>
<polygon points="574,659 580,659 584,663 584,669 580,673 574,673 570,669 570,663" fill="#fff"/>
<polygon points="578.7,659 584.7,659 588.7,663 588.7,669 584.7,673 578.7,673 574.7,669 574.7,663" fill="#fff"/>
<polygon points="589.6,659 595.6,659 599.6,663 599.6,669 595.6,673 589.6,673 585.6,669 585.6,663" fill="#fff"/>
<polygon points="594,659 600,659 604,663 604,669 600,673 594,673 590,669 590,663" fill="#fff"/>
<polygon points="599.6,659 605.6,659 609.6,663 609.6,669 605.6,673 599.6,673 595.6,669 595.6,663" fill="#fff"/>
<polygon points="603.2,659 609.2,659 613.2,663 613.2,669 609.2,673 603.2,673 599.2,669 599.2,663" fill="#fff"/>
<polygon points="609.6,659 615.6,659 619.6,663 619.6,669 615.6,673 609.6,673 605.6,669 605.6,663" fill="#fff"/>
<polygon points="623,659 629,659 633,663 633,669 629,673 623,673 619,669 619,663" fill="#fff"/>
<polygon points="627,659 633,659 637,663 637,669 633,673 627,673 623,669 623,663" fill="#fff"/>
<polygon points="633,659 639,659 643,663 643,669 639,673 633,673 629,669 629,663" fill="#fff"/>
<polygon points="644,659 650,659 654,663 654,669 650,673 644,673 640,669 640,663" fill="#fff"/>
<polygon points="648,659 654,659 658,663 658,669 654,673 648,673 644,669 644,663" fill="#fff"/>
<polygon points="654,659 660,659 664,663 664,669 660,673 654,673 650,669 650,663" fill="#fff"/>
<polygon points="658.5,659 664.5,659 668.5,663 668.5,669 664.5,673 658.5,673 654.5,669 654.5,663" fill="#fff"/>
<polygon points="670.3,659 676.3,659 680.3,663 680.3,669 676.3,673 670.3,673 666.3,669 666.3,663" fill="#fff"/>
<polygon points="673,659 679,659 683,663 683,669 679,673 673,673 669,669 669,663" fill="#fff"/>
<polygon points="677.6,659 683.6,659 687.6,663 687.6,669 683.6,673 677.6,673 673.6,669 673.6,663" fill="#fff"/>
<polygon points="689.3,659 695.3,659 699.3,663 699.3,669 695.3,673 689.3,673 685.3,669 685.3,663" fill="#fff"/>
<polygon points="693,659 699,659 703,663 703,669 699,673 693,673 689,669 689,663" fill="#fff"/>
<polygon points="699,659 705,659 709,663 709,669 705,673 699,673 695,669 695,663" fill="#fff"/>
<polygon points="717.4,659 723.4,659 727.4,663 727.4,669 723.4,673 717.4,673 713.4,669 713.4,663" fill="#fff"/>
<polygon points="722,659 728,659 732,663 732,669 728,673 722,673 718,669 718,663" fill="#fff"/>
<polygon points="727.4,659 733.4,659 737.4,663 737.4,669 733.4,673 727.4,673 723.4,669 723.4,663" fill="#fff"/>
<polygon points="737.4,659 743.4,659 747.4,663 747.4,669 743.4,673 737.4,673 733.4,669 733.4,663" fill="#fff"/>
<polygon points="741.7,659 747.7,659 751.7,663 751.7,669 747.7,673 741.7,673 737.7,669 737.7,663" fill="#fff"/>
<polygon points="760.6,659 766.6,659 770.6,663 770.6,669 766.6,673 760.6,673 756.6,669 756.6,663" fill="#fff"/>
<polygon points="764.5,659 770.5,659 774.5,663 774.5,669 770.5,673 764.5,673 760.5,669 760.5,663" fill="#fff"/>
<polygon points="770,659 776,659 780,663 780,669 776,673 770,673 766,669 766,663" fill="#fff"/>
<polygon points="787.8,659 793.8,659 797.8,663 797.8,669 793.8,673 787.8,673 783.8,669 783.8,663" fill="#fff"/>
<polygon points="793,659 799,659 803,663 803,669 799,673 793,673 789,669 789,663" fill="#fff"/>
<polygon points="799,659 805,659 809,663 809,669 805,673 799,673 795,669 795,663" fill="#fff"/>
<polygon points="813.5,659 819.5,659 823.5,663 823.5,669 819.5,673 813.5,673 809.5,669 809.5,663" fill="#fff"/>
<polygon points="833,659 839,659 843,663 843,669 839,673 833,673 829,669 829,663" fill="#fff"/>
<polygon points="837.5,659 843.5,659 847.5,663 847.5,669 843.5,673 837.5,673 833.5,669 833.5,663" fill="#fff"/>
<polygon points="843,659 849,659 853,663 853,669 849,673 843,673 839,669 839,663" fill="#fff"/>
<polygon points="1012.5,659 1018.5,659 1022.5,663 1022.5,669 1018.5,673 1012.5,673 1008.5,669 1008.5,663" fill="#fff"/>
<polygon points="1017,659 1023,659 1027,663 1027,669 1023,673 1017,673 1013,669 1013,663" fill="#fff"/>
<polygon points="1022,659 1028,659 1032,663 1032,669 1028,673 1022,673 1018,669 1018,663" fill="#fff"/>
<polygon points="1028.6,659 1034.6,659 1038.6,663 1038.6,669 1034.6,673 1028.6,673 1024.6,669 1024.6,663" fill="#fff"/>
<polygon points="1040.3,659 1046.3,659 1050.3,663 1050.3,669 1046.3,673 1040.3,673 1036.3,669 1036.3,663" fill="#fff"/>
<polygon points="28.8,599 34.8,599 38.8,603 38.8,609 34.8,613 28.8,613 24.8,609 24.8,603" fill="#fff"/>
<polygon points="26,614 32,614 36,618 36,624 32,628 26,628 22,624 22,618" fill="#fff"/>
<polygon points="28,629 34,629 38,633 38,639 34,643 28,643 24,639 24,633" fill="#fff"/>
<polygon points="31.7,644 37.7,644 41.7,648 41.7,654 37.7,658 31.7,658 27.7,654 27.7,648" fill="#fff"/>
</g>
<rect x="22" y="759" width="10" height="8" fill="#0099ff"/>
<rect x="47" y="759" width="10" height="8" fill="#ff9900"/>
<rect x="22" y="771" width="10" height="8" fill="#66cc66"/>
<rect x="47" y="771" width="10" height="8" fill="#cc6666"/>
<rect x="22" y="783" width="10" height="8" fill="#3377bb"/>
<rect x="47" y="783" width="10" height="8" fill="#dd3300"/>
<circle cx="315" cy="760" r="4.5" fill="#b4b4b4" stroke="#fff" stroke-width="1"/>
<polygon points="311,772 313,769 317,769 319,772 317,775 313,775" fill="#00ff00"/>
<polygon points="311,784 313,781 317,781 319,784 317,787 313,787" fill="#ff0000"/>
<defs><filter id="nf" x="0" y="0" width="1103" height="806" filterUnits="userSpaceOnUse"><feOffset dx="0" dy="0"/></filter></defs>
<g filter="url(#nf)">
<text transform="translate(27,42) scale(1.5,1)" font-size="16.4" font-weight="bold" font-style="italic" fill="#8c8cbe" fill-opacity="0.92">N</text>
<text transform="translate(50.0,42) scale(1.65,1)" font-size="16.4" font-weight="bold" font-style="italic" fill="#8c8cbe" fill-opacity="0.92">A</text>
<text transform="translate(75.4,42) scale(1.6,1)" font-size="16.4" font-weight="bold" font-style="italic" fill="#8c8cbe" fill-opacity="0.92">N</text>
<text transform="translate(101.0,42) scale(1.63,1)" font-size="16.4" font-weight="bold" font-style="italic" fill="#8c8cbe" fill-opacity="0.92">E</text>
<text transform="translate(123.4,42) scale(1.87,1)" font-size="16.4" font-weight="bold" font-style="italic" fill="#8c8cbe" fill-opacity="0.92">X</text>
<text x="9.7" y="15" font-size="11" text-anchor="start" fill="#fff" textLength="104.5" lengthAdjust="spacing" xml:space="preserve">Prices for&#160; eBATS&#160; on</text>
<text x="121" y="15" font-size="11" text-anchor="start" fill="#fff" textLength="53" lengthAdjust="spacing" xml:space="preserve">03/23/2012</text>
<text x="180.3" y="15" font-size="11" text-anchor="start" fill="#fff" >-</text>
<text x="190.6" y="15" font-size="11" text-anchor="start" fill="#fff" textLength="205.6" lengthAdjust="spacing" xml:space="preserve">Elapsed Time: 2 Seconds, 700 Milliseconds</text>
<text x="402.7" y="15" font-size="11" text-anchor="start" fill="#fff" >-</text>
<text x="413" y="15" font-size="11" text-anchor="start" fill="#fff" textLength="84" lengthAdjust="spacing" xml:space="preserve">Total Quotes: 962</text>
<text x="503.3" y="15" font-size="11" text-anchor="start" fill="#fff" textLength="83.8" lengthAdjust="spacing" xml:space="preserve">Total Trades: 532</text>
<text x="967.6" y="15" font-size="11" text-anchor="start" fill="#fff" textLength="83.4" lengthAdjust="spacing" xml:space="preserve">QTSequencer G3</text>
<text x="9.4" y="372" font-size="11" text-anchor="start" fill="#fff" textLength="161.7" lengthAdjust="spacing" xml:space="preserve">Sizes for&#160; eBATS&#160; on&#160; 03/23/2012</text>
<text x="1066.8" y="41.5" font-size="11" text-anchor="start" fill="#fff"  textLength="26.2" lengthAdjust="spacing">16.00</text>
<text x="1066.8" y="73.5" font-size="11" text-anchor="start" fill="#fff"  textLength="26.2" lengthAdjust="spacing">14.00</text>
<text x="1066.8" y="105.5" font-size="11" text-anchor="start" fill="#fff"  textLength="26.2" lengthAdjust="spacing">12.00</text>
<text x="1066.8" y="137.5" font-size="11" text-anchor="start" fill="#fff"  textLength="26.2" lengthAdjust="spacing">10.00</text>
<text x="1066.8" y="169.5" font-size="11" text-anchor="start" fill="#fff"  textLength="20" lengthAdjust="spacing">8.00</text>
<text x="1066.8" y="201.5" font-size="11" text-anchor="start" fill="#fff"  textLength="20" lengthAdjust="spacing">6.00</text>
<text x="1066.8" y="233.5" font-size="11" text-anchor="start" fill="#fff"  textLength="20" lengthAdjust="spacing">4.00</text>
<text x="1066.8" y="265.5" font-size="11" text-anchor="start" fill="#fff"  textLength="20" lengthAdjust="spacing">2.00</text>
<text x="1066.8" y="297.5" font-size="11" text-anchor="start" fill="#fff"  textLength="20" lengthAdjust="spacing">0.00</text>
<text x="1066.8" y="329.5" font-size="11" text-anchor="start" fill="#fff"  textLength="23.8" lengthAdjust="spacing">-2.00</text>
<text x="1066.8" y="384" font-size="11" text-anchor="start" fill="#fff"  textLength="23.6" lengthAdjust="spacing">2000</text>
<text x="1066.8" y="458.5" font-size="11" text-anchor="start" fill="#fff"  textLength="23.6" lengthAdjust="spacing">1500</text>
<text x="1066.8" y="534.5" font-size="11" text-anchor="start" fill="#fff"  textLength="23.6" lengthAdjust="spacing">1000</text>
<text x="1066.8" y="610.5" font-size="11" text-anchor="start" fill="#fff"  textLength="17.7" lengthAdjust="spacing">500</text>
<text x="1066.8" y="687" font-size="11" text-anchor="start" fill="#fff" >0</text>
<text x="10.3" y="341" font-size="9.4" text-anchor="middle" fill="#fff" >0</text>
<text x="182" y="341" font-size="9.4" text-anchor="middle" fill="#fff" >250</text>
<text x="354" y="341" font-size="9.4" text-anchor="middle" fill="#fff" >500</text>
<text x="527.5" y="341" font-size="9.4" text-anchor="middle" fill="#fff" >750</text>
<text x="701" y="341" font-size="9.4" text-anchor="middle" fill="#fff" >1000</text>
<text x="874" y="341" font-size="9.4" text-anchor="middle" fill="#fff" >1250</text>
<text x="50" y="352.7" font-size="9.4" text-anchor="middle" fill="#fff" >11:14:18:500</text>
<text x="132" y="352.7" font-size="9.4" text-anchor="middle" fill="#fff" >11:14:18:850</text>
<text x="216" y="352.7" font-size="9.4" text-anchor="middle" fill="#fff" >11:14:19:225</text>
<text x="301" y="352.7" font-size="9.4" text-anchor="middle" fill="#fff" >11:14:19:350</text>
<text x="391" y="352.7" font-size="9.4" text-anchor="middle" fill="#fff" >11:14:19:425</text>
<text x="468.5" y="352.7" font-size="9.4" text-anchor="middle" fill="#fff" >11:14:19:500</text>
<text x="562" y="352.7" font-size="9.4" text-anchor="middle" fill="#fff" >11:14:19:575</text>
<text x="657" y="352.7" font-size="9.4" text-anchor="middle" fill="#fff" >11:14:19:700</text>
<text x="771" y="352.7" font-size="9.4" text-anchor="middle" fill="#fff" >11:14:19:775</text>
<text x="923" y="352.7" font-size="9.4" text-anchor="middle" fill="#fff" >11:14:19:825</text>
<text x="1037.2" y="352.7" font-size="9.4" text-anchor="middle" fill="#fff" >11:14:19:850</text>
<text x="10.3" y="698" font-size="9.4" text-anchor="middle" fill="#fff" >0</text>
<text x="182" y="698" font-size="9.4" text-anchor="middle" fill="#fff" >250</text>
<text x="354" y="698" font-size="9.4" text-anchor="middle" fill="#fff" >500</text>
<text x="527.5" y="698" font-size="9.4" text-anchor="middle" fill="#fff" >750</text>
<text x="701" y="698" font-size="9.4" text-anchor="middle" fill="#fff" >1000</text>
<text x="874" y="698" font-size="9.4" text-anchor="middle" fill="#fff" >1250</text>
<text x="50" y="709.7" font-size="9.4" text-anchor="middle" fill="#fff" >11:14:18:500</text>
<text x="132" y="709.7" font-size="9.4" text-anchor="middle" fill="#fff" >11:14:18:850</text>
<text x="216" y="709.7" font-size="9.4" text-anchor="middle" fill="#fff" >11:14:19:225</text>
<text x="301" y="709.7" font-size="9.4" text-anchor="middle" fill="#fff" >11:14:19:350</text>
<text x="391" y="709.7" font-size="9.4" text-anchor="middle" fill="#fff" >11:14:19:425</text>
<text x="468.5" y="709.7" font-size="9.4" text-anchor="middle" fill="#fff" >11:14:19:500</text>
<text x="562" y="709.7" font-size="9.4" text-anchor="middle" fill="#fff" >11:14:19:575</text>
<text x="657" y="709.7" font-size="9.4" text-anchor="middle" fill="#fff" >11:14:19:700</text>
<text x="771" y="709.7" font-size="9.4" text-anchor="middle" fill="#fff" >11:14:19:775</text>
<text x="923" y="709.7" font-size="9.4" text-anchor="middle" fill="#fff" >11:14:19:825</text>
<text x="1037.2" y="709.7" font-size="9.4" text-anchor="middle" fill="#fff" >11:14:19:850</text>
<text x="16.8" y="740.3" font-size="11" text-anchor="start" fill="#fff" textLength="48.8" lengthAdjust="spacing" xml:space="preserve">ColorLgnd</text>
<text x="20" y="754" font-size="11" text-anchor="start" fill="#fff" >Bid</text>
<text x="45" y="754" font-size="11" text-anchor="start" fill="#fff" >Ask</text>
<text x="79" y="754" font-size="11" text-anchor="start" fill="#fff" >Exg</text>
<text x="134.5" y="740.3" font-size="11" text-anchor="start" fill="#fff" textLength="94.3" lengthAdjust="spacing" xml:space="preserve">Reporting Exg Stats</text>
<text x="135" y="754" font-size="11" text-anchor="start" fill="#fff" ># Quotes</text>
<text x="196" y="754" font-size="11" text-anchor="start" fill="#fff" ># Trades</text>
<text x="79.5" y="766" font-size="11" text-anchor="start" fill="#fff" textLength="28.5" lengthAdjust="spacing" xml:space="preserve">NSDQ</text>
<text x="178" y="766" font-size="11" text-anchor="end" fill="#fff" >961</text>
<text x="239" y="766" font-size="11" text-anchor="end" fill="#fff" >532</text>
<text x="79.5" y="778" font-size="11" text-anchor="start" fill="#fff" textLength="27.3" lengthAdjust="spacing" xml:space="preserve">BOST</text>
<text x="178" y="778" font-size="11" text-anchor="end" fill="#fff" >0</text>
<text x="239" y="778" font-size="11" text-anchor="end" fill="#fff" >0</text>
<text x="79.5" y="790" font-size="11" text-anchor="start" fill="#fff" textLength="28" lengthAdjust="spacing" xml:space="preserve">BATY</text>
<text x="178" y="790" font-size="11" text-anchor="end" fill="#fff" >1</text>
<text x="239" y="790" font-size="11" text-anchor="end" fill="#fff" >0</text>
<text x="314.8" y="740.3" font-size="11" text-anchor="start" fill="#fff" textLength="81.3" lengthAdjust="spacing" xml:space="preserve">Composite/NBBO</text>
<text x="324.7" y="764" font-size="11" text-anchor="start" fill="#fff" textLength="86.3" lengthAdjust="spacing" xml:space="preserve">Composite Trades</text>
<text x="324.7" y="776" font-size="11" text-anchor="start" fill="#fff" textLength="80.5" lengthAdjust="spacing" xml:space="preserve">National Best Bid</text>
<text x="324.7" y="788" font-size="11" text-anchor="start" fill="#fff" textLength="83.8" lengthAdjust="spacing" xml:space="preserve">National Best Ask</text>
</g>
</svg>
</body></html>
